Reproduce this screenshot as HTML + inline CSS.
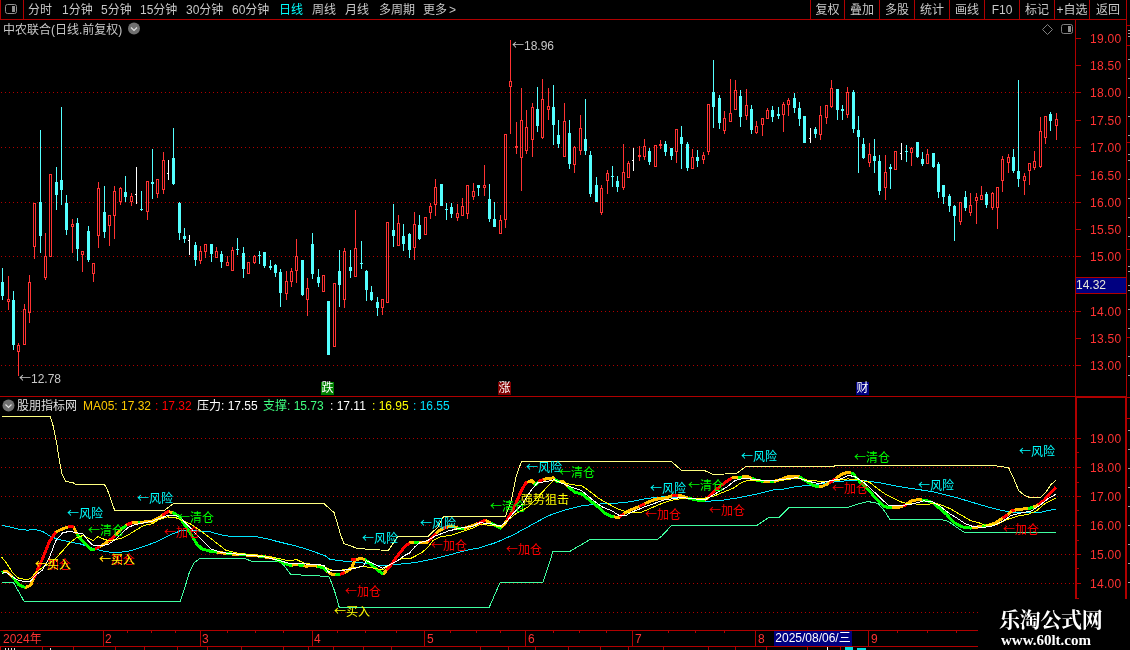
<!DOCTYPE html>
<html lang="zh"><head><meta charset="utf-8"><title>中农联合</title>
<style>
html,body{margin:0;padding:0;background:#000}
body{width:1130px;height:650px;position:relative;overflow:hidden;font-family:"Liberation Sans","Noto Sans CJK SC",sans-serif}
svg{position:absolute;left:0;top:0}
#txt{position:absolute;left:0;top:0;width:1130px;height:650px;will-change:transform;transform:translateZ(0)}
.t{position:absolute;white-space:nowrap;font-size:12px;line-height:14px;font-weight:400}
.a{font-family:"Liberation Sans","Noto Sans CJK SC",sans-serif;font-weight:400}
.ax{letter-spacing:0.3px}
.c{text-align:center}
.ar{font-family:"Noto Sans CJK SC",sans-serif;display:inline-block;width:12px}
.w{font-family:"Liberation Serif","Noto Serif CJK SC",serif;line-height:1.2}
</style></head><body>
<svg width="1130" height="650" viewBox="0 0 1130 650" shape-rendering="crispEdges">
<path d="M1 92.5H1074" stroke="#b00000" stroke-width="1" stroke-dasharray="1 3" fill="none"/>
<path d="M1 147.5H1074" stroke="#b00000" stroke-width="1" stroke-dasharray="1 3" fill="none"/>
<path d="M1 202.5H1074" stroke="#b00000" stroke-width="1" stroke-dasharray="1 3" fill="none"/>
<path d="M1 256.5H1074" stroke="#b00000" stroke-width="1" stroke-dasharray="1 3" fill="none"/>
<path d="M1 311.5H1074" stroke="#b00000" stroke-width="1" stroke-dasharray="1 3" fill="none"/>
<path d="M1 365.5H1074" stroke="#b00000" stroke-width="1" stroke-dasharray="1 3" fill="none"/>
<path d="M1 438.5H1074" stroke="#b00000" stroke-width="1" stroke-dasharray="1 3" fill="none"/>
<path d="M1 467.5H1074" stroke="#b00000" stroke-width="1" stroke-dasharray="1 3" fill="none"/>
<path d="M1 496.5H1074" stroke="#b00000" stroke-width="1" stroke-dasharray="1 3" fill="none"/>
<path d="M1 525.5H1074" stroke="#b00000" stroke-width="1" stroke-dasharray="1 3" fill="none"/>
<path d="M1 554.5H1074" stroke="#b00000" stroke-width="1" stroke-dasharray="1 3" fill="none"/>
<path d="M1 583.5H1074" stroke="#b00000" stroke-width="1" stroke-dasharray="1 3" fill="none"/>
<path d="M1 612.5H1074" stroke="#b00000" stroke-width="1" stroke-dasharray="1 3" fill="none"/>
<rect x="0" y="19" width="1127" height="1" fill="#b00000"/>
<rect x="0" y="0" width="1" height="19" fill="#b00000"/>
<rect x="23" y="0" width="1" height="19" fill="#b00000"/>
<rect x="810" y="0" width="1" height="19" fill="#b00000"/>
<rect x="844" y="0" width="1" height="19" fill="#b00000"/>
<rect x="879" y="0" width="1" height="19" fill="#b00000"/>
<rect x="914" y="0" width="1" height="19" fill="#b00000"/>
<rect x="949" y="0" width="1" height="19" fill="#b00000"/>
<rect x="984" y="0" width="1" height="19" fill="#b00000"/>
<rect x="1019" y="0" width="1" height="19" fill="#b00000"/>
<rect x="1054" y="0" width="1" height="19" fill="#b00000"/>
<rect x="1089" y="0" width="1" height="19" fill="#b00000"/>
<rect x="1126" y="0" width="1" height="397" fill="#b00000"/>
<rect x="1075" y="19" width="1" height="378" fill="#b00000"/>
<rect x="0" y="396" width="1075" height="1" fill="#b00000"/>
<rect x="1075" y="396" width="52" height="2" fill="#b00000"/>
<rect x="1075" y="396" width="2" height="203" fill="#b00000"/>
<rect x="1125" y="396" width="2" height="203" fill="#b00000"/>
<rect x="1127" y="25" width="3" height="1" fill="#b00000"/>
<rect x="1127" y="45" width="3" height="1" fill="#b00000"/>
<rect x="1127" y="142" width="3" height="1" fill="#b00000"/>
<rect x="1127" y="249" width="3" height="1" fill="#b00000"/>
<rect x="1127" y="337" width="3" height="1" fill="#b00000"/>
<rect x="1127" y="397" width="3" height="1" fill="#b00000"/>
<rect x="1127" y="418" width="3" height="1" fill="#b00000"/>
<rect x="1128" y="30" width="2" height="1" fill="#a0a0a0"/>
<rect x="1128" y="33" width="2" height="1" fill="#a0a0a0"/>
<rect x="1128" y="36" width="2" height="1" fill="#a0a0a0"/>
<rect x="1128" y="59" width="2" height="1" fill="#a0a0a0"/>
<rect x="1128" y="78" width="2" height="1" fill="#a0a0a0"/>
<rect x="1128" y="97" width="2" height="1" fill="#a0a0a0"/>
<rect x="1128" y="116" width="2" height="1" fill="#a0a0a0"/>
<rect x="1128" y="135" width="2" height="1" fill="#a0a0a0"/>
<rect x="1128" y="154" width="2" height="1" fill="#a0a0a0"/>
<rect x="1128" y="160" width="2" height="1" fill="#a0a0a0"/>
<rect x="1128" y="179" width="2" height="1" fill="#a0a0a0"/>
<rect x="1128" y="198" width="2" height="1" fill="#a0a0a0"/>
<rect x="1128" y="217" width="2" height="1" fill="#a0a0a0"/>
<rect x="1128" y="236" width="2" height="1" fill="#a0a0a0"/>
<rect x="1128" y="266" width="2" height="1" fill="#a0a0a0"/>
<rect x="1128" y="271" width="2" height="1" fill="#a0a0a0"/>
<rect x="1128" y="285" width="2" height="1" fill="#a0a0a0"/>
<rect x="1128" y="290" width="2" height="1" fill="#a0a0a0"/>
<rect x="1128" y="309" width="2" height="1" fill="#a0a0a0"/>
<rect x="1128" y="328" width="2" height="1" fill="#a0a0a0"/>
<rect x="1128" y="356" width="2" height="1" fill="#a0a0a0"/>
<rect x="1128" y="375" width="2" height="1" fill="#a0a0a0"/>
<rect x="1128" y="430" width="2" height="1" fill="#a0a0a0"/>
<rect x="1128" y="449" width="2" height="1" fill="#a0a0a0"/>
<rect x="1128" y="468" width="2" height="1" fill="#a0a0a0"/>
<rect x="1128" y="487" width="2" height="1" fill="#a0a0a0"/>
<rect x="1128" y="506" width="2" height="1" fill="#a0a0a0"/>
<rect x="1128" y="525" width="2" height="1" fill="#a0a0a0"/>
<rect x="1128" y="544" width="2" height="1" fill="#a0a0a0"/>
<rect x="1128" y="563" width="2" height="1" fill="#a0a0a0"/>
<rect x="1128" y="582" width="2" height="1" fill="#a0a0a0"/>
<rect x="0" y="630" width="978" height="1" fill="#b00000"/>
<rect x="0" y="646" width="978" height="1" fill="#b00000"/>
<rect x="103" y="630" width="1" height="16" fill="#b00000"/>
<rect x="200" y="630" width="1" height="16" fill="#b00000"/>
<rect x="312" y="630" width="1" height="16" fill="#b00000"/>
<rect x="424" y="630" width="1" height="16" fill="#b00000"/>
<rect x="525" y="630" width="1" height="16" fill="#b00000"/>
<rect x="632" y="630" width="1" height="16" fill="#b00000"/>
<rect x="755" y="630" width="1" height="16" fill="#b00000"/>
<rect x="868" y="630" width="1" height="16" fill="#b00000"/>
<rect x="127" y="631" width="1" height="2" fill="#b00000"/>
<rect x="151" y="631" width="1" height="2" fill="#b00000"/>
<rect x="175" y="631" width="1" height="2" fill="#b00000"/>
<rect x="227" y="631" width="1" height="2" fill="#b00000"/>
<rect x="255" y="631" width="1" height="2" fill="#b00000"/>
<rect x="283" y="631" width="1" height="2" fill="#b00000"/>
<rect x="337" y="631" width="1" height="2" fill="#b00000"/>
<rect x="365" y="631" width="1" height="2" fill="#b00000"/>
<rect x="396" y="631" width="1" height="2" fill="#b00000"/>
<rect x="450" y="631" width="1" height="2" fill="#b00000"/>
<rect x="476" y="631" width="1" height="2" fill="#b00000"/>
<rect x="500" y="631" width="1" height="2" fill="#b00000"/>
<rect x="553" y="631" width="1" height="2" fill="#b00000"/>
<rect x="579" y="631" width="1" height="2" fill="#b00000"/>
<rect x="606" y="631" width="1" height="2" fill="#b00000"/>
<rect x="668" y="631" width="1" height="2" fill="#b00000"/>
<rect x="695" y="631" width="1" height="2" fill="#b00000"/>
<rect x="724" y="631" width="1" height="2" fill="#b00000"/>
<rect x="897" y="631" width="1" height="2" fill="#b00000"/>
<rect x="927" y="631" width="1" height="2" fill="#b00000"/>
<rect x="956" y="631" width="1" height="2" fill="#b00000"/>
<rect x="0" y="647" width="1" height="3" fill="#b00000"/>
<rect x="42" y="647" width="1" height="3" fill="#b00000"/>
<rect x="73" y="647" width="1" height="3" fill="#b00000"/>
<rect x="115" y="647" width="1" height="3" fill="#b00000"/>
<rect x="144" y="647" width="1" height="3" fill="#b00000"/>
<rect x="177" y="647" width="1" height="3" fill="#b00000"/>
<rect x="207" y="647" width="1" height="3" fill="#b00000"/>
<rect x="241" y="647" width="1" height="3" fill="#b00000"/>
<rect x="283" y="647" width="1" height="3" fill="#b00000"/>
<rect x="308" y="647" width="1" height="3" fill="#b00000"/>
<rect x="333" y="647" width="1" height="3" fill="#b00000"/>
<rect x="363" y="647" width="1" height="3" fill="#b00000"/>
<rect x="391" y="647" width="1" height="3" fill="#b00000"/>
<rect x="480" y="647" width="1" height="3" fill="#b00000"/>
<rect x="508" y="647" width="1" height="3" fill="#b00000"/>
<rect x="535" y="647" width="1" height="3" fill="#b00000"/>
<rect x="568" y="647" width="1" height="3" fill="#b00000"/>
<rect x="600" y="647" width="1" height="3" fill="#b00000"/>
<rect x="628" y="647" width="1" height="3" fill="#b00000"/>
<rect x="663" y="647" width="1" height="3" fill="#b00000"/>
<rect x="708" y="647" width="1" height="3" fill="#b00000"/>
<rect x="735" y="647" width="1" height="3" fill="#b00000"/>
<rect x="766" y="647" width="1" height="3" fill="#b00000"/>
<rect x="807" y="647" width="1" height="3" fill="#b00000"/>
<rect x="840" y="647" width="1" height="3" fill="#b00000"/>
<rect x="827" y="647" width="1" height="3" fill="#ffffff"/>
<rect x="845" y="647" width="8" height="3" fill="#00e0e0"/>
<rect x="857" y="648" width="9" height="2" fill="#00e0e0"/>
<rect x="5" y="648" width="1" height="2" fill="#e0e0e0"/>
<rect x="8" y="648" width="1" height="2" fill="#e0e0e0"/>
<rect x="11" y="648" width="1" height="2" fill="#e0e0e0"/>
<rect x="14" y="648" width="1" height="2" fill="#e0e0e0"/>
<rect x="50" y="648" width="1" height="2" fill="#e0e0e0"/>
<rect x="1076" y="38" width="5" height="1" fill="#b00000"/>
<rect x="1076" y="65" width="5" height="1" fill="#b00000"/>
<rect x="1076" y="92" width="5" height="1" fill="#b00000"/>
<rect x="1076" y="120" width="5" height="1" fill="#b00000"/>
<rect x="1076" y="147" width="5" height="1" fill="#b00000"/>
<rect x="1076" y="175" width="5" height="1" fill="#b00000"/>
<rect x="1076" y="202" width="5" height="1" fill="#b00000"/>
<rect x="1076" y="229" width="5" height="1" fill="#b00000"/>
<rect x="1076" y="256" width="5" height="1" fill="#b00000"/>
<rect x="1076" y="284" width="5" height="1" fill="#b00000"/>
<rect x="1076" y="311" width="5" height="1" fill="#b00000"/>
<rect x="1076" y="338" width="5" height="1" fill="#b00000"/>
<rect x="1076" y="365" width="5" height="1" fill="#b00000"/>
<rect x="1077" y="438" width="4" height="1" fill="#b00000"/>
<rect x="1077" y="452" width="2" height="1" fill="#b00000"/>
<rect x="1077" y="467" width="4" height="1" fill="#b00000"/>
<rect x="1077" y="482" width="2" height="1" fill="#b00000"/>
<rect x="1077" y="496" width="4" height="1" fill="#b00000"/>
<rect x="1077" y="510" width="2" height="1" fill="#b00000"/>
<rect x="1077" y="525" width="4" height="1" fill="#b00000"/>
<rect x="1077" y="540" width="2" height="1" fill="#b00000"/>
<rect x="1077" y="554" width="4" height="1" fill="#b00000"/>
<rect x="1077" y="568" width="2" height="1" fill="#b00000"/>
<rect x="1077" y="583" width="4" height="1" fill="#b00000"/>
<rect x="1077" y="598" width="2" height="1" fill="#b00000"/>
<rect x="2" y="268" width="1" height="32" fill="#54ffff"/>
<rect x="1" y="282" width="3" height="14" fill="#54ffff"/>
<rect x="8" y="276" width="1" height="23" fill="#ff3232"/>
<rect x="8" y="302" width="1" height="8" fill="#ff3232"/>
<rect x="7" y="299" width="3" height="1" fill="#ff3232"/>
<rect x="7" y="301" width="3" height="1" fill="#ff3232"/>
<rect x="7" y="299" width="1" height="3" fill="#ff3232"/>
<rect x="9" y="299" width="1" height="3" fill="#ff3232"/>
<rect x="13" y="291" width="1" height="59" fill="#54ffff"/>
<rect x="12" y="300" width="3" height="45" fill="#54ffff"/>
<rect x="18" y="343" width="1" height="2" fill="#ff3232"/>
<rect x="18" y="352" width="1" height="24" fill="#ff3232"/>
<rect x="17" y="345" width="3" height="1" fill="#ff3232"/>
<rect x="17" y="351" width="3" height="1" fill="#ff3232"/>
<rect x="17" y="345" width="1" height="7" fill="#ff3232"/>
<rect x="19" y="345" width="1" height="7" fill="#ff3232"/>
<rect x="24" y="304" width="1" height="5" fill="#ff3232"/>
<rect x="23" y="309" width="3" height="1" fill="#ff3232"/>
<rect x="23" y="344" width="3" height="1" fill="#ff3232"/>
<rect x="23" y="309" width="1" height="36" fill="#ff3232"/>
<rect x="25" y="309" width="1" height="36" fill="#ff3232"/>
<rect x="29" y="275" width="1" height="7" fill="#ff3232"/>
<rect x="29" y="313" width="1" height="10" fill="#ff3232"/>
<rect x="28" y="282" width="3" height="1" fill="#ff3232"/>
<rect x="28" y="312" width="3" height="1" fill="#ff3232"/>
<rect x="28" y="282" width="1" height="31" fill="#ff3232"/>
<rect x="30" y="282" width="1" height="31" fill="#ff3232"/>
<rect x="34" y="247" width="1" height="12" fill="#ff3232"/>
<rect x="33" y="203" width="3" height="1" fill="#ff3232"/>
<rect x="33" y="246" width="3" height="1" fill="#ff3232"/>
<rect x="33" y="203" width="1" height="44" fill="#ff3232"/>
<rect x="35" y="203" width="1" height="44" fill="#ff3232"/>
<rect x="40" y="130" width="1" height="123" fill="#54ffff"/>
<rect x="39" y="202" width="3" height="34" fill="#54ffff"/>
<rect x="45" y="233" width="1" height="23" fill="#ff3232"/>
<rect x="45" y="278" width="1" height="2" fill="#ff3232"/>
<rect x="44" y="256" width="3" height="1" fill="#ff3232"/>
<rect x="44" y="277" width="3" height="1" fill="#ff3232"/>
<rect x="44" y="256" width="1" height="22" fill="#ff3232"/>
<rect x="46" y="256" width="1" height="22" fill="#ff3232"/>
<rect x="49" y="174" width="3" height="1" fill="#ff3232"/>
<rect x="49" y="256" width="3" height="1" fill="#ff3232"/>
<rect x="49" y="174" width="1" height="83" fill="#ff3232"/>
<rect x="51" y="174" width="1" height="83" fill="#ff3232"/>
<rect x="56" y="167" width="1" height="43" fill="#54ffff"/>
<rect x="55" y="182" width="3" height="13" fill="#54ffff"/>
<rect x="61" y="107" width="1" height="98" fill="#54ffff"/>
<rect x="60" y="180" width="3" height="10" fill="#54ffff"/>
<rect x="66" y="195" width="1" height="40" fill="#54ffff"/>
<rect x="65" y="203" width="3" height="27" fill="#54ffff"/>
<rect x="72" y="219" width="1" height="5" fill="#ff3232"/>
<rect x="72" y="227" width="1" height="26" fill="#ff3232"/>
<rect x="71" y="224" width="3" height="1" fill="#ff3232"/>
<rect x="71" y="226" width="3" height="1" fill="#ff3232"/>
<rect x="71" y="224" width="1" height="3" fill="#ff3232"/>
<rect x="73" y="224" width="1" height="3" fill="#ff3232"/>
<rect x="77" y="218" width="1" height="43" fill="#54ffff"/>
<rect x="76" y="223" width="3" height="26" fill="#54ffff"/>
<rect x="82" y="255" width="1" height="17" fill="#ff3232"/>
<rect x="81" y="251" width="3" height="1" fill="#ff3232"/>
<rect x="81" y="254" width="3" height="1" fill="#ff3232"/>
<rect x="81" y="251" width="1" height="4" fill="#ff3232"/>
<rect x="83" y="251" width="1" height="4" fill="#ff3232"/>
<rect x="88" y="226" width="1" height="36" fill="#54ffff"/>
<rect x="87" y="231" width="3" height="29" fill="#54ffff"/>
<rect x="93" y="274" width="1" height="8" fill="#ff3232"/>
<rect x="92" y="263" width="3" height="1" fill="#ff3232"/>
<rect x="92" y="273" width="3" height="1" fill="#ff3232"/>
<rect x="92" y="263" width="1" height="11" fill="#ff3232"/>
<rect x="94" y="263" width="1" height="11" fill="#ff3232"/>
<rect x="98" y="182" width="1" height="6" fill="#ff3232"/>
<rect x="98" y="236" width="1" height="12" fill="#ff3232"/>
<rect x="97" y="188" width="3" height="1" fill="#ff3232"/>
<rect x="97" y="235" width="3" height="1" fill="#ff3232"/>
<rect x="97" y="188" width="1" height="48" fill="#ff3232"/>
<rect x="99" y="188" width="1" height="48" fill="#ff3232"/>
<rect x="104" y="186" width="1" height="52" fill="#54ffff"/>
<rect x="103" y="212" width="3" height="20" fill="#54ffff"/>
<rect x="109" y="226" width="1" height="20" fill="#ff3232"/>
<rect x="108" y="215" width="3" height="1" fill="#ff3232"/>
<rect x="108" y="225" width="3" height="1" fill="#ff3232"/>
<rect x="108" y="215" width="1" height="11" fill="#ff3232"/>
<rect x="110" y="215" width="1" height="11" fill="#ff3232"/>
<rect x="114" y="186" width="1" height="5" fill="#ff3232"/>
<rect x="114" y="216" width="1" height="23" fill="#ff3232"/>
<rect x="113" y="191" width="3" height="1" fill="#ff3232"/>
<rect x="113" y="215" width="3" height="1" fill="#ff3232"/>
<rect x="113" y="191" width="1" height="25" fill="#ff3232"/>
<rect x="115" y="191" width="1" height="25" fill="#ff3232"/>
<rect x="120" y="187" width="1" height="1" fill="#ff3232"/>
<rect x="120" y="202" width="1" height="3" fill="#ff3232"/>
<rect x="119" y="188" width="3" height="1" fill="#ff3232"/>
<rect x="119" y="201" width="3" height="1" fill="#ff3232"/>
<rect x="119" y="188" width="1" height="14" fill="#ff3232"/>
<rect x="121" y="188" width="1" height="14" fill="#ff3232"/>
<rect x="125" y="176" width="1" height="26" fill="#54ffff"/>
<rect x="124" y="192" width="3" height="5" fill="#54ffff"/>
<rect x="131" y="193" width="1" height="3" fill="#ff3232"/>
<rect x="131" y="202" width="1" height="4" fill="#ff3232"/>
<rect x="130" y="196" width="3" height="1" fill="#ff3232"/>
<rect x="130" y="201" width="3" height="1" fill="#ff3232"/>
<rect x="130" y="196" width="1" height="6" fill="#ff3232"/>
<rect x="132" y="196" width="1" height="6" fill="#ff3232"/>
<rect x="136" y="167" width="1" height="37" fill="#ffffff"/>
<rect x="135" y="194" width="2" height="1" fill="#ffffff"/>
<rect x="141" y="191" width="1" height="20" fill="#54ffff"/>
<rect x="140" y="209" width="3" height="1" fill="#54ffff"/>
<rect x="147" y="212" width="1" height="8" fill="#ff3232"/>
<rect x="146" y="181" width="3" height="1" fill="#ff3232"/>
<rect x="146" y="211" width="3" height="1" fill="#ff3232"/>
<rect x="146" y="181" width="1" height="31" fill="#ff3232"/>
<rect x="148" y="181" width="1" height="31" fill="#ff3232"/>
<rect x="152" y="149" width="1" height="50" fill="#54ffff"/>
<rect x="151" y="182" width="3" height="2" fill="#54ffff"/>
<rect x="157" y="194" width="1" height="4" fill="#ff3232"/>
<rect x="156" y="179" width="3" height="1" fill="#ff3232"/>
<rect x="156" y="193" width="3" height="1" fill="#ff3232"/>
<rect x="156" y="179" width="1" height="15" fill="#ff3232"/>
<rect x="158" y="179" width="1" height="15" fill="#ff3232"/>
<rect x="163" y="152" width="1" height="8" fill="#ff3232"/>
<rect x="163" y="190" width="1" height="4" fill="#ff3232"/>
<rect x="162" y="160" width="3" height="1" fill="#ff3232"/>
<rect x="162" y="189" width="3" height="1" fill="#ff3232"/>
<rect x="162" y="160" width="1" height="30" fill="#ff3232"/>
<rect x="164" y="160" width="1" height="30" fill="#ff3232"/>
<rect x="168" y="160" width="1" height="20" fill="#ffffff"/>
<rect x="167" y="173" width="2" height="1" fill="#ffffff"/>
<rect x="173" y="128" width="1" height="57" fill="#54ffff"/>
<rect x="172" y="158" width="3" height="26" fill="#54ffff"/>
<rect x="179" y="202" width="1" height="38" fill="#54ffff"/>
<rect x="178" y="203" width="3" height="30" fill="#54ffff"/>
<rect x="184" y="228" width="1" height="15" fill="#54ffff"/>
<rect x="183" y="236" width="3" height="3" fill="#54ffff"/>
<rect x="189" y="235" width="1" height="20" fill="#ffffff"/>
<rect x="188" y="240" width="2" height="1" fill="#ffffff"/>
<rect x="195" y="242" width="1" height="24" fill="#54ffff"/>
<rect x="194" y="245" width="3" height="15" fill="#54ffff"/>
<rect x="200" y="246" width="1" height="5" fill="#ff3232"/>
<rect x="200" y="261" width="1" height="3" fill="#ff3232"/>
<rect x="199" y="251" width="3" height="1" fill="#ff3232"/>
<rect x="199" y="260" width="3" height="1" fill="#ff3232"/>
<rect x="199" y="251" width="1" height="10" fill="#ff3232"/>
<rect x="201" y="251" width="1" height="10" fill="#ff3232"/>
<rect x="205" y="252" width="1" height="6" fill="#ff3232"/>
<rect x="204" y="244" width="3" height="1" fill="#ff3232"/>
<rect x="204" y="251" width="3" height="1" fill="#ff3232"/>
<rect x="204" y="244" width="1" height="8" fill="#ff3232"/>
<rect x="206" y="244" width="1" height="8" fill="#ff3232"/>
<rect x="211" y="244" width="1" height="18" fill="#54ffff"/>
<rect x="210" y="244" width="3" height="10" fill="#54ffff"/>
<rect x="216" y="247" width="1" height="4" fill="#ff3232"/>
<rect x="215" y="251" width="3" height="1" fill="#ff3232"/>
<rect x="215" y="257" width="3" height="1" fill="#ff3232"/>
<rect x="215" y="251" width="1" height="7" fill="#ff3232"/>
<rect x="217" y="251" width="1" height="7" fill="#ff3232"/>
<rect x="221" y="251" width="1" height="17" fill="#54ffff"/>
<rect x="220" y="254" width="3" height="8" fill="#54ffff"/>
<rect x="227" y="256" width="1" height="6" fill="#ff3232"/>
<rect x="226" y="262" width="3" height="1" fill="#ff3232"/>
<rect x="226" y="265" width="3" height="1" fill="#ff3232"/>
<rect x="226" y="262" width="1" height="4" fill="#ff3232"/>
<rect x="228" y="262" width="1" height="4" fill="#ff3232"/>
<rect x="232" y="247" width="1" height="3" fill="#ff3232"/>
<rect x="231" y="250" width="3" height="1" fill="#ff3232"/>
<rect x="231" y="270" width="3" height="1" fill="#ff3232"/>
<rect x="231" y="250" width="1" height="21" fill="#ff3232"/>
<rect x="233" y="250" width="1" height="21" fill="#ff3232"/>
<rect x="237" y="238" width="1" height="17" fill="#54ffff"/>
<rect x="236" y="249" width="3" height="1" fill="#54ffff"/>
<rect x="243" y="247" width="1" height="31" fill="#54ffff"/>
<rect x="242" y="253" width="3" height="16" fill="#54ffff"/>
<rect x="247" y="262" width="3" height="1" fill="#ff3232"/>
<rect x="247" y="273" width="3" height="1" fill="#ff3232"/>
<rect x="247" y="262" width="1" height="12" fill="#ff3232"/>
<rect x="249" y="262" width="1" height="12" fill="#ff3232"/>
<rect x="254" y="255" width="1" height="1" fill="#ff3232"/>
<rect x="254" y="263" width="1" height="1" fill="#ff3232"/>
<rect x="253" y="256" width="3" height="1" fill="#ff3232"/>
<rect x="253" y="262" width="3" height="1" fill="#ff3232"/>
<rect x="253" y="256" width="1" height="7" fill="#ff3232"/>
<rect x="255" y="256" width="1" height="7" fill="#ff3232"/>
<rect x="259" y="251" width="1" height="13" fill="#54ffff"/>
<rect x="258" y="255" width="3" height="1" fill="#54ffff"/>
<rect x="264" y="252" width="1" height="16" fill="#54ffff"/>
<rect x="263" y="252" width="3" height="14" fill="#54ffff"/>
<rect x="270" y="260" width="1" height="10" fill="#54ffff"/>
<rect x="269" y="266" width="3" height="2" fill="#54ffff"/>
<rect x="275" y="264" width="1" height="13" fill="#54ffff"/>
<rect x="274" y="265" width="3" height="8" fill="#54ffff"/>
<rect x="280" y="269" width="1" height="38" fill="#54ffff"/>
<rect x="279" y="272" width="3" height="21" fill="#54ffff"/>
<rect x="286" y="271" width="1" height="10" fill="#ff3232"/>
<rect x="286" y="294" width="1" height="6" fill="#ff3232"/>
<rect x="285" y="281" width="3" height="1" fill="#ff3232"/>
<rect x="285" y="293" width="3" height="1" fill="#ff3232"/>
<rect x="285" y="281" width="1" height="13" fill="#ff3232"/>
<rect x="287" y="281" width="1" height="13" fill="#ff3232"/>
<rect x="291" y="268" width="1" height="3" fill="#ff3232"/>
<rect x="291" y="282" width="1" height="5" fill="#ff3232"/>
<rect x="290" y="271" width="3" height="1" fill="#ff3232"/>
<rect x="290" y="281" width="3" height="1" fill="#ff3232"/>
<rect x="290" y="271" width="1" height="11" fill="#ff3232"/>
<rect x="292" y="271" width="1" height="11" fill="#ff3232"/>
<rect x="296" y="239" width="1" height="17" fill="#ff3232"/>
<rect x="296" y="271" width="1" height="12" fill="#ff3232"/>
<rect x="295" y="256" width="3" height="1" fill="#ff3232"/>
<rect x="295" y="270" width="3" height="1" fill="#ff3232"/>
<rect x="295" y="256" width="1" height="15" fill="#ff3232"/>
<rect x="297" y="256" width="1" height="15" fill="#ff3232"/>
<rect x="302" y="260" width="1" height="36" fill="#54ffff"/>
<rect x="301" y="260" width="3" height="35" fill="#54ffff"/>
<rect x="307" y="278" width="1" height="10" fill="#ff3232"/>
<rect x="307" y="300" width="1" height="16" fill="#ff3232"/>
<rect x="306" y="288" width="3" height="1" fill="#ff3232"/>
<rect x="306" y="299" width="3" height="1" fill="#ff3232"/>
<rect x="306" y="288" width="1" height="12" fill="#ff3232"/>
<rect x="308" y="288" width="1" height="12" fill="#ff3232"/>
<rect x="312" y="233" width="1" height="46" fill="#54ffff"/>
<rect x="311" y="244" width="3" height="30" fill="#54ffff"/>
<rect x="318" y="269" width="1" height="18" fill="#54ffff"/>
<rect x="317" y="277" width="3" height="6" fill="#54ffff"/>
<rect x="322" y="275" width="3" height="1" fill="#ff3232"/>
<rect x="322" y="291" width="3" height="1" fill="#ff3232"/>
<rect x="322" y="275" width="1" height="17" fill="#ff3232"/>
<rect x="324" y="275" width="1" height="17" fill="#ff3232"/>
<rect x="328" y="301" width="1" height="54" fill="#54ffff"/>
<rect x="327" y="301" width="3" height="54" fill="#54ffff"/>
<rect x="333" y="283" width="3" height="1" fill="#ff3232"/>
<rect x="333" y="346" width="3" height="1" fill="#ff3232"/>
<rect x="333" y="283" width="1" height="64" fill="#ff3232"/>
<rect x="335" y="283" width="1" height="64" fill="#ff3232"/>
<rect x="339" y="250" width="1" height="57" fill="#54ffff"/>
<rect x="338" y="271" width="3" height="14" fill="#54ffff"/>
<rect x="344" y="248" width="1" height="3" fill="#ff3232"/>
<rect x="344" y="300" width="1" height="8" fill="#ff3232"/>
<rect x="343" y="251" width="3" height="1" fill="#ff3232"/>
<rect x="343" y="299" width="3" height="1" fill="#ff3232"/>
<rect x="343" y="251" width="1" height="49" fill="#ff3232"/>
<rect x="345" y="251" width="1" height="49" fill="#ff3232"/>
<rect x="350" y="250" width="1" height="28" fill="#54ffff"/>
<rect x="349" y="267" width="3" height="4" fill="#54ffff"/>
<rect x="355" y="210" width="1" height="38" fill="#ff3232"/>
<rect x="354" y="248" width="3" height="1" fill="#ff3232"/>
<rect x="354" y="276" width="3" height="1" fill="#ff3232"/>
<rect x="354" y="248" width="1" height="29" fill="#ff3232"/>
<rect x="356" y="248" width="1" height="29" fill="#ff3232"/>
<rect x="361" y="241" width="1" height="28" fill="#54ffff"/>
<rect x="360" y="263" width="3" height="1" fill="#54ffff"/>
<rect x="366" y="270" width="1" height="31" fill="#54ffff"/>
<rect x="365" y="271" width="3" height="19" fill="#54ffff"/>
<rect x="371" y="286" width="1" height="15" fill="#54ffff"/>
<rect x="370" y="292" width="3" height="8" fill="#54ffff"/>
<rect x="377" y="297" width="1" height="19" fill="#54ffff"/>
<rect x="376" y="302" width="3" height="6" fill="#54ffff"/>
<rect x="382" y="308" width="1" height="7" fill="#ff3232"/>
<rect x="381" y="299" width="3" height="1" fill="#ff3232"/>
<rect x="381" y="307" width="3" height="1" fill="#ff3232"/>
<rect x="381" y="299" width="1" height="9" fill="#ff3232"/>
<rect x="383" y="299" width="1" height="9" fill="#ff3232"/>
<rect x="386" y="222" width="3" height="1" fill="#ff3232"/>
<rect x="386" y="302" width="3" height="1" fill="#ff3232"/>
<rect x="386" y="222" width="1" height="81" fill="#ff3232"/>
<rect x="388" y="222" width="1" height="81" fill="#ff3232"/>
<rect x="393" y="204" width="1" height="43" fill="#54ffff"/>
<rect x="392" y="230" width="3" height="6" fill="#54ffff"/>
<rect x="398" y="215" width="1" height="8" fill="#ff3232"/>
<rect x="397" y="223" width="3" height="1" fill="#ff3232"/>
<rect x="397" y="245" width="3" height="1" fill="#ff3232"/>
<rect x="397" y="223" width="1" height="23" fill="#ff3232"/>
<rect x="399" y="223" width="1" height="23" fill="#ff3232"/>
<rect x="403" y="224" width="1" height="27" fill="#54ffff"/>
<rect x="402" y="236" width="3" height="8" fill="#54ffff"/>
<rect x="409" y="233" width="1" height="25" fill="#54ffff"/>
<rect x="408" y="234" width="3" height="16" fill="#54ffff"/>
<rect x="414" y="212" width="1" height="12" fill="#ff3232"/>
<rect x="414" y="248" width="1" height="12" fill="#ff3232"/>
<rect x="413" y="224" width="3" height="1" fill="#ff3232"/>
<rect x="413" y="247" width="3" height="1" fill="#ff3232"/>
<rect x="413" y="224" width="1" height="24" fill="#ff3232"/>
<rect x="415" y="224" width="1" height="24" fill="#ff3232"/>
<rect x="419" y="215" width="1" height="25" fill="#54ffff"/>
<rect x="418" y="225" width="3" height="14" fill="#54ffff"/>
<rect x="424" y="217" width="3" height="1" fill="#ff3232"/>
<rect x="424" y="234" width="3" height="1" fill="#ff3232"/>
<rect x="424" y="217" width="1" height="18" fill="#ff3232"/>
<rect x="426" y="217" width="1" height="18" fill="#ff3232"/>
<rect x="430" y="203" width="1" height="3" fill="#ff3232"/>
<rect x="430" y="213" width="1" height="6" fill="#ff3232"/>
<rect x="429" y="206" width="3" height="1" fill="#ff3232"/>
<rect x="429" y="212" width="3" height="1" fill="#ff3232"/>
<rect x="429" y="206" width="1" height="7" fill="#ff3232"/>
<rect x="431" y="206" width="1" height="7" fill="#ff3232"/>
<rect x="435" y="179" width="1" height="8" fill="#ff3232"/>
<rect x="435" y="205" width="1" height="11" fill="#ff3232"/>
<rect x="434" y="187" width="3" height="1" fill="#ff3232"/>
<rect x="434" y="204" width="3" height="1" fill="#ff3232"/>
<rect x="434" y="187" width="1" height="18" fill="#ff3232"/>
<rect x="436" y="187" width="1" height="18" fill="#ff3232"/>
<rect x="441" y="184" width="1" height="22" fill="#54ffff"/>
<rect x="440" y="184" width="3" height="22" fill="#54ffff"/>
<rect x="446" y="203" width="1" height="17" fill="#54ffff"/>
<rect x="445" y="209" width="3" height="1" fill="#54ffff"/>
<rect x="451" y="203" width="1" height="15" fill="#54ffff"/>
<rect x="450" y="207" width="3" height="7" fill="#54ffff"/>
<rect x="457" y="204" width="1" height="9" fill="#ff3232"/>
<rect x="457" y="218" width="1" height="3" fill="#ff3232"/>
<rect x="456" y="213" width="3" height="1" fill="#ff3232"/>
<rect x="456" y="217" width="3" height="1" fill="#ff3232"/>
<rect x="456" y="213" width="1" height="5" fill="#ff3232"/>
<rect x="458" y="213" width="1" height="5" fill="#ff3232"/>
<rect x="462" y="198" width="1" height="8" fill="#ff3232"/>
<rect x="461" y="206" width="3" height="1" fill="#ff3232"/>
<rect x="461" y="215" width="3" height="1" fill="#ff3232"/>
<rect x="461" y="206" width="1" height="10" fill="#ff3232"/>
<rect x="463" y="206" width="1" height="10" fill="#ff3232"/>
<rect x="467" y="214" width="1" height="5" fill="#ff3232"/>
<rect x="466" y="185" width="3" height="1" fill="#ff3232"/>
<rect x="466" y="213" width="3" height="1" fill="#ff3232"/>
<rect x="466" y="185" width="1" height="29" fill="#ff3232"/>
<rect x="468" y="185" width="1" height="29" fill="#ff3232"/>
<rect x="473" y="183" width="1" height="8" fill="#ff3232"/>
<rect x="473" y="197" width="1" height="3" fill="#ff3232"/>
<rect x="472" y="191" width="3" height="1" fill="#ff3232"/>
<rect x="472" y="196" width="3" height="1" fill="#ff3232"/>
<rect x="472" y="191" width="1" height="6" fill="#ff3232"/>
<rect x="474" y="191" width="1" height="6" fill="#ff3232"/>
<rect x="478" y="185" width="1" height="11" fill="#54ffff"/>
<rect x="477" y="185" width="3" height="3" fill="#54ffff"/>
<rect x="484" y="165" width="1" height="20" fill="#ff3232"/>
<rect x="484" y="188" width="1" height="8" fill="#ff3232"/>
<rect x="483" y="185" width="3" height="1" fill="#ff3232"/>
<rect x="483" y="187" width="3" height="1" fill="#ff3232"/>
<rect x="483" y="185" width="1" height="3" fill="#ff3232"/>
<rect x="485" y="185" width="1" height="3" fill="#ff3232"/>
<rect x="489" y="184" width="1" height="38" fill="#54ffff"/>
<rect x="488" y="199" width="3" height="20" fill="#54ffff"/>
<rect x="494" y="202" width="1" height="25" fill="#54ffff"/>
<rect x="493" y="219" width="3" height="8" fill="#54ffff"/>
<rect x="500" y="215" width="1" height="5" fill="#ff3232"/>
<rect x="499" y="220" width="3" height="1" fill="#ff3232"/>
<rect x="499" y="233" width="3" height="1" fill="#ff3232"/>
<rect x="499" y="220" width="1" height="14" fill="#ff3232"/>
<rect x="501" y="220" width="1" height="14" fill="#ff3232"/>
<rect x="505" y="220" width="1" height="8" fill="#ff3232"/>
<rect x="504" y="134" width="3" height="1" fill="#ff3232"/>
<rect x="504" y="219" width="3" height="1" fill="#ff3232"/>
<rect x="504" y="134" width="1" height="86" fill="#ff3232"/>
<rect x="506" y="134" width="1" height="86" fill="#ff3232"/>
<rect x="510" y="40" width="1" height="41" fill="#ff3232"/>
<rect x="510" y="87" width="1" height="47" fill="#ff3232"/>
<rect x="509" y="81" width="3" height="1" fill="#ff3232"/>
<rect x="509" y="86" width="3" height="1" fill="#ff3232"/>
<rect x="509" y="81" width="1" height="6" fill="#ff3232"/>
<rect x="511" y="81" width="1" height="6" fill="#ff3232"/>
<rect x="516" y="122" width="1" height="24" fill="#ff3232"/>
<rect x="516" y="148" width="1" height="6" fill="#ff3232"/>
<rect x="515" y="146" width="3" height="2" fill="#ff3232"/>
<rect x="521" y="88" width="1" height="32" fill="#ff3232"/>
<rect x="521" y="158" width="1" height="33" fill="#ff3232"/>
<rect x="520" y="120" width="3" height="1" fill="#ff3232"/>
<rect x="520" y="157" width="3" height="1" fill="#ff3232"/>
<rect x="520" y="120" width="1" height="38" fill="#ff3232"/>
<rect x="522" y="120" width="1" height="38" fill="#ff3232"/>
<rect x="526" y="110" width="1" height="17" fill="#ff3232"/>
<rect x="526" y="151" width="1" height="3" fill="#ff3232"/>
<rect x="525" y="127" width="3" height="1" fill="#ff3232"/>
<rect x="525" y="150" width="3" height="1" fill="#ff3232"/>
<rect x="525" y="127" width="1" height="24" fill="#ff3232"/>
<rect x="527" y="127" width="1" height="24" fill="#ff3232"/>
<rect x="532" y="103" width="1" height="4" fill="#ff3232"/>
<rect x="532" y="140" width="1" height="17" fill="#ff3232"/>
<rect x="531" y="107" width="3" height="1" fill="#ff3232"/>
<rect x="531" y="139" width="3" height="1" fill="#ff3232"/>
<rect x="531" y="107" width="1" height="33" fill="#ff3232"/>
<rect x="533" y="107" width="1" height="33" fill="#ff3232"/>
<rect x="537" y="87" width="1" height="45" fill="#54ffff"/>
<rect x="536" y="109" width="3" height="17" fill="#54ffff"/>
<rect x="542" y="79" width="1" height="20" fill="#ff3232"/>
<rect x="542" y="138" width="1" height="1" fill="#ff3232"/>
<rect x="541" y="99" width="3" height="1" fill="#ff3232"/>
<rect x="541" y="137" width="3" height="1" fill="#ff3232"/>
<rect x="541" y="99" width="1" height="39" fill="#ff3232"/>
<rect x="543" y="99" width="1" height="39" fill="#ff3232"/>
<rect x="548" y="88" width="1" height="18" fill="#ff3232"/>
<rect x="548" y="110" width="1" height="10" fill="#ff3232"/>
<rect x="547" y="106" width="3" height="1" fill="#ff3232"/>
<rect x="547" y="109" width="3" height="1" fill="#ff3232"/>
<rect x="547" y="106" width="1" height="4" fill="#ff3232"/>
<rect x="549" y="106" width="1" height="4" fill="#ff3232"/>
<rect x="553" y="85" width="1" height="60" fill="#54ffff"/>
<rect x="552" y="107" width="3" height="18" fill="#54ffff"/>
<rect x="558" y="120" width="1" height="28" fill="#54ffff"/>
<rect x="557" y="135" width="3" height="9" fill="#54ffff"/>
<rect x="564" y="103" width="1" height="18" fill="#ff3232"/>
<rect x="563" y="121" width="3" height="1" fill="#ff3232"/>
<rect x="563" y="156" width="3" height="1" fill="#ff3232"/>
<rect x="563" y="121" width="1" height="36" fill="#ff3232"/>
<rect x="565" y="121" width="1" height="36" fill="#ff3232"/>
<rect x="569" y="120" width="1" height="49" fill="#54ffff"/>
<rect x="568" y="133" width="3" height="31" fill="#54ffff"/>
<rect x="574" y="146" width="1" height="1" fill="#ff3232"/>
<rect x="574" y="165" width="1" height="8" fill="#ff3232"/>
<rect x="573" y="147" width="3" height="1" fill="#ff3232"/>
<rect x="573" y="164" width="3" height="1" fill="#ff3232"/>
<rect x="573" y="147" width="1" height="18" fill="#ff3232"/>
<rect x="575" y="147" width="1" height="18" fill="#ff3232"/>
<rect x="580" y="115" width="1" height="13" fill="#ff3232"/>
<rect x="580" y="151" width="1" height="4" fill="#ff3232"/>
<rect x="579" y="128" width="3" height="1" fill="#ff3232"/>
<rect x="579" y="150" width="3" height="1" fill="#ff3232"/>
<rect x="579" y="128" width="1" height="23" fill="#ff3232"/>
<rect x="581" y="128" width="1" height="23" fill="#ff3232"/>
<rect x="585" y="99" width="1" height="56" fill="#54ffff"/>
<rect x="584" y="139" width="3" height="12" fill="#54ffff"/>
<rect x="590" y="151" width="1" height="46" fill="#54ffff"/>
<rect x="589" y="155" width="3" height="39" fill="#54ffff"/>
<rect x="596" y="177" width="1" height="25" fill="#54ffff"/>
<rect x="595" y="185" width="3" height="17" fill="#54ffff"/>
<rect x="601" y="185" width="1" height="3" fill="#ff3232"/>
<rect x="601" y="213" width="1" height="2" fill="#ff3232"/>
<rect x="600" y="188" width="3" height="1" fill="#ff3232"/>
<rect x="600" y="212" width="3" height="1" fill="#ff3232"/>
<rect x="600" y="188" width="1" height="25" fill="#ff3232"/>
<rect x="602" y="188" width="1" height="25" fill="#ff3232"/>
<rect x="607" y="170" width="1" height="3" fill="#ff3232"/>
<rect x="607" y="181" width="1" height="13" fill="#ff3232"/>
<rect x="606" y="173" width="3" height="1" fill="#ff3232"/>
<rect x="606" y="180" width="3" height="1" fill="#ff3232"/>
<rect x="606" y="173" width="1" height="8" fill="#ff3232"/>
<rect x="608" y="173" width="1" height="8" fill="#ff3232"/>
<rect x="612" y="166" width="1" height="21" fill="#54ffff"/>
<rect x="611" y="176" width="3" height="1" fill="#54ffff"/>
<rect x="617" y="176" width="1" height="16" fill="#54ffff"/>
<rect x="616" y="181" width="3" height="6" fill="#54ffff"/>
<rect x="623" y="144" width="1" height="28" fill="#ff3232"/>
<rect x="623" y="188" width="1" height="2" fill="#ff3232"/>
<rect x="622" y="172" width="3" height="1" fill="#ff3232"/>
<rect x="622" y="187" width="3" height="1" fill="#ff3232"/>
<rect x="622" y="172" width="1" height="16" fill="#ff3232"/>
<rect x="624" y="172" width="1" height="16" fill="#ff3232"/>
<rect x="628" y="161" width="1" height="2" fill="#ff3232"/>
<rect x="627" y="163" width="3" height="1" fill="#ff3232"/>
<rect x="627" y="177" width="3" height="1" fill="#ff3232"/>
<rect x="627" y="163" width="1" height="15" fill="#ff3232"/>
<rect x="629" y="163" width="1" height="15" fill="#ff3232"/>
<rect x="633" y="148" width="1" height="23" fill="#ffffff"/>
<rect x="632" y="160" width="2" height="1" fill="#ffffff"/>
<rect x="639" y="146" width="1" height="9" fill="#ff3232"/>
<rect x="639" y="157" width="1" height="4" fill="#ff3232"/>
<rect x="638" y="155" width="3" height="2" fill="#ff3232"/>
<rect x="644" y="139" width="1" height="7" fill="#ff3232"/>
<rect x="644" y="157" width="1" height="3" fill="#ff3232"/>
<rect x="643" y="146" width="3" height="1" fill="#ff3232"/>
<rect x="643" y="156" width="3" height="1" fill="#ff3232"/>
<rect x="643" y="146" width="1" height="11" fill="#ff3232"/>
<rect x="645" y="146" width="1" height="11" fill="#ff3232"/>
<rect x="649" y="148" width="1" height="17" fill="#54ffff"/>
<rect x="648" y="151" width="3" height="11" fill="#54ffff"/>
<rect x="654" y="145" width="3" height="1" fill="#ff3232"/>
<rect x="654" y="166" width="3" height="1" fill="#ff3232"/>
<rect x="654" y="145" width="1" height="22" fill="#ff3232"/>
<rect x="656" y="145" width="1" height="22" fill="#ff3232"/>
<rect x="660" y="140" width="1" height="4" fill="#ff3232"/>
<rect x="660" y="146" width="1" height="3" fill="#ff3232"/>
<rect x="659" y="144" width="3" height="2" fill="#ff3232"/>
<rect x="665" y="141" width="1" height="15" fill="#54ffff"/>
<rect x="664" y="144" width="3" height="8" fill="#54ffff"/>
<rect x="671" y="148" width="1" height="12" fill="#54ffff"/>
<rect x="670" y="148" width="3" height="8" fill="#54ffff"/>
<rect x="676" y="152" width="1" height="11" fill="#ff3232"/>
<rect x="675" y="129" width="3" height="1" fill="#ff3232"/>
<rect x="675" y="151" width="3" height="1" fill="#ff3232"/>
<rect x="675" y="129" width="1" height="23" fill="#ff3232"/>
<rect x="677" y="129" width="1" height="23" fill="#ff3232"/>
<rect x="681" y="126" width="1" height="43" fill="#54ffff"/>
<rect x="680" y="137" width="3" height="7" fill="#54ffff"/>
<rect x="687" y="142" width="1" height="29" fill="#54ffff"/>
<rect x="686" y="144" width="3" height="24" fill="#54ffff"/>
<rect x="692" y="149" width="1" height="8" fill="#ff3232"/>
<rect x="691" y="157" width="3" height="1" fill="#ff3232"/>
<rect x="691" y="168" width="3" height="1" fill="#ff3232"/>
<rect x="691" y="157" width="1" height="12" fill="#ff3232"/>
<rect x="693" y="157" width="1" height="12" fill="#ff3232"/>
<rect x="697" y="150" width="1" height="17" fill="#54ffff"/>
<rect x="696" y="157" width="3" height="4" fill="#54ffff"/>
<rect x="703" y="152" width="1" height="3" fill="#ff3232"/>
<rect x="703" y="160" width="1" height="4" fill="#ff3232"/>
<rect x="702" y="155" width="3" height="1" fill="#ff3232"/>
<rect x="702" y="159" width="3" height="1" fill="#ff3232"/>
<rect x="702" y="155" width="1" height="5" fill="#ff3232"/>
<rect x="704" y="155" width="1" height="5" fill="#ff3232"/>
<rect x="708" y="152" width="1" height="3" fill="#ff3232"/>
<rect x="707" y="104" width="3" height="1" fill="#ff3232"/>
<rect x="707" y="151" width="3" height="1" fill="#ff3232"/>
<rect x="707" y="104" width="1" height="48" fill="#ff3232"/>
<rect x="709" y="104" width="1" height="48" fill="#ff3232"/>
<rect x="713" y="60" width="1" height="68" fill="#54ffff"/>
<rect x="712" y="92" width="3" height="15" fill="#54ffff"/>
<rect x="719" y="95" width="1" height="34" fill="#54ffff"/>
<rect x="718" y="98" width="3" height="25" fill="#54ffff"/>
<rect x="724" y="111" width="1" height="7" fill="#ff3232"/>
<rect x="724" y="131" width="1" height="3" fill="#ff3232"/>
<rect x="723" y="118" width="3" height="1" fill="#ff3232"/>
<rect x="723" y="130" width="3" height="1" fill="#ff3232"/>
<rect x="723" y="118" width="1" height="13" fill="#ff3232"/>
<rect x="725" y="118" width="1" height="13" fill="#ff3232"/>
<rect x="730" y="79" width="1" height="34" fill="#ff3232"/>
<rect x="729" y="113" width="3" height="1" fill="#ff3232"/>
<rect x="729" y="121" width="3" height="1" fill="#ff3232"/>
<rect x="729" y="113" width="1" height="9" fill="#ff3232"/>
<rect x="731" y="113" width="1" height="9" fill="#ff3232"/>
<rect x="735" y="80" width="1" height="10" fill="#ff3232"/>
<rect x="734" y="90" width="3" height="1" fill="#ff3232"/>
<rect x="734" y="109" width="3" height="1" fill="#ff3232"/>
<rect x="734" y="90" width="1" height="20" fill="#ff3232"/>
<rect x="736" y="90" width="1" height="20" fill="#ff3232"/>
<rect x="740" y="90" width="1" height="37" fill="#54ffff"/>
<rect x="739" y="96" width="3" height="21" fill="#54ffff"/>
<rect x="746" y="89" width="1" height="16" fill="#ff3232"/>
<rect x="746" y="116" width="1" height="4" fill="#ff3232"/>
<rect x="745" y="105" width="3" height="1" fill="#ff3232"/>
<rect x="745" y="115" width="3" height="1" fill="#ff3232"/>
<rect x="745" y="105" width="1" height="11" fill="#ff3232"/>
<rect x="747" y="105" width="1" height="11" fill="#ff3232"/>
<rect x="751" y="105" width="1" height="29" fill="#54ffff"/>
<rect x="750" y="109" width="3" height="21" fill="#54ffff"/>
<rect x="756" y="121" width="1" height="5" fill="#ff3232"/>
<rect x="756" y="133" width="1" height="1" fill="#ff3232"/>
<rect x="755" y="126" width="3" height="1" fill="#ff3232"/>
<rect x="755" y="132" width="3" height="1" fill="#ff3232"/>
<rect x="755" y="126" width="1" height="7" fill="#ff3232"/>
<rect x="757" y="126" width="1" height="7" fill="#ff3232"/>
<rect x="762" y="125" width="1" height="11" fill="#ff3232"/>
<rect x="761" y="118" width="3" height="1" fill="#ff3232"/>
<rect x="761" y="124" width="3" height="1" fill="#ff3232"/>
<rect x="761" y="118" width="1" height="7" fill="#ff3232"/>
<rect x="763" y="118" width="1" height="7" fill="#ff3232"/>
<rect x="767" y="108" width="1" height="2" fill="#ff3232"/>
<rect x="766" y="110" width="3" height="1" fill="#ff3232"/>
<rect x="766" y="118" width="3" height="1" fill="#ff3232"/>
<rect x="766" y="110" width="1" height="9" fill="#ff3232"/>
<rect x="768" y="110" width="1" height="9" fill="#ff3232"/>
<rect x="772" y="106" width="1" height="16" fill="#54ffff"/>
<rect x="771" y="110" width="3" height="7" fill="#54ffff"/>
<rect x="778" y="107" width="1" height="12" fill="#54ffff"/>
<rect x="777" y="114" width="3" height="2" fill="#54ffff"/>
<rect x="783" y="102" width="1" height="2" fill="#ff3232"/>
<rect x="783" y="115" width="1" height="17" fill="#ff3232"/>
<rect x="782" y="104" width="3" height="1" fill="#ff3232"/>
<rect x="782" y="114" width="3" height="1" fill="#ff3232"/>
<rect x="782" y="104" width="1" height="11" fill="#ff3232"/>
<rect x="784" y="104" width="1" height="11" fill="#ff3232"/>
<rect x="788" y="98" width="1" height="2" fill="#ff3232"/>
<rect x="788" y="105" width="1" height="11" fill="#ff3232"/>
<rect x="787" y="100" width="3" height="1" fill="#ff3232"/>
<rect x="787" y="104" width="3" height="1" fill="#ff3232"/>
<rect x="787" y="100" width="1" height="5" fill="#ff3232"/>
<rect x="789" y="100" width="1" height="5" fill="#ff3232"/>
<rect x="794" y="93" width="1" height="20" fill="#54ffff"/>
<rect x="793" y="98" width="3" height="10" fill="#54ffff"/>
<rect x="799" y="102" width="1" height="24" fill="#54ffff"/>
<rect x="798" y="108" width="3" height="11" fill="#54ffff"/>
<rect x="804" y="116" width="1" height="27" fill="#54ffff"/>
<rect x="803" y="116" width="3" height="27" fill="#54ffff"/>
<rect x="810" y="128" width="1" height="15" fill="#ffffff"/>
<rect x="809" y="138" width="2" height="1" fill="#ffffff"/>
<rect x="815" y="127" width="1" height="11" fill="#54ffff"/>
<rect x="814" y="129" width="3" height="5" fill="#54ffff"/>
<rect x="820" y="106" width="1" height="9" fill="#ff3232"/>
<rect x="820" y="135" width="1" height="5" fill="#ff3232"/>
<rect x="819" y="115" width="3" height="1" fill="#ff3232"/>
<rect x="819" y="134" width="3" height="1" fill="#ff3232"/>
<rect x="819" y="115" width="1" height="20" fill="#ff3232"/>
<rect x="821" y="115" width="1" height="20" fill="#ff3232"/>
<rect x="826" y="118" width="1" height="6" fill="#ff3232"/>
<rect x="825" y="105" width="3" height="1" fill="#ff3232"/>
<rect x="825" y="117" width="3" height="1" fill="#ff3232"/>
<rect x="825" y="105" width="1" height="13" fill="#ff3232"/>
<rect x="827" y="105" width="1" height="13" fill="#ff3232"/>
<rect x="831" y="80" width="1" height="8" fill="#ff3232"/>
<rect x="831" y="107" width="1" height="1" fill="#ff3232"/>
<rect x="830" y="88" width="3" height="1" fill="#ff3232"/>
<rect x="830" y="106" width="3" height="1" fill="#ff3232"/>
<rect x="830" y="88" width="1" height="19" fill="#ff3232"/>
<rect x="832" y="88" width="1" height="19" fill="#ff3232"/>
<rect x="837" y="89" width="1" height="31" fill="#54ffff"/>
<rect x="836" y="89" width="3" height="21" fill="#54ffff"/>
<rect x="842" y="105" width="1" height="15" fill="#54ffff"/>
<rect x="841" y="109" width="3" height="2" fill="#54ffff"/>
<rect x="847" y="87" width="1" height="5" fill="#ff3232"/>
<rect x="847" y="115" width="1" height="3" fill="#ff3232"/>
<rect x="846" y="92" width="3" height="1" fill="#ff3232"/>
<rect x="846" y="114" width="3" height="1" fill="#ff3232"/>
<rect x="846" y="92" width="1" height="23" fill="#ff3232"/>
<rect x="848" y="92" width="1" height="23" fill="#ff3232"/>
<rect x="853" y="90" width="1" height="43" fill="#54ffff"/>
<rect x="852" y="92" width="3" height="37" fill="#54ffff"/>
<rect x="858" y="116" width="1" height="57" fill="#54ffff"/>
<rect x="857" y="130" width="3" height="7" fill="#54ffff"/>
<rect x="863" y="138" width="1" height="21" fill="#54ffff"/>
<rect x="862" y="144" width="3" height="14" fill="#54ffff"/>
<rect x="869" y="143" width="1" height="11" fill="#ff3232"/>
<rect x="869" y="163" width="1" height="4" fill="#ff3232"/>
<rect x="868" y="154" width="3" height="1" fill="#ff3232"/>
<rect x="868" y="162" width="3" height="1" fill="#ff3232"/>
<rect x="868" y="154" width="1" height="9" fill="#ff3232"/>
<rect x="870" y="154" width="1" height="9" fill="#ff3232"/>
<rect x="874" y="139" width="1" height="34" fill="#54ffff"/>
<rect x="873" y="156" width="3" height="5" fill="#54ffff"/>
<rect x="879" y="155" width="1" height="40" fill="#54ffff"/>
<rect x="878" y="161" width="3" height="30" fill="#54ffff"/>
<rect x="885" y="155" width="1" height="17" fill="#ff3232"/>
<rect x="885" y="188" width="1" height="12" fill="#ff3232"/>
<rect x="884" y="172" width="3" height="1" fill="#ff3232"/>
<rect x="884" y="187" width="3" height="1" fill="#ff3232"/>
<rect x="884" y="172" width="1" height="16" fill="#ff3232"/>
<rect x="886" y="172" width="1" height="16" fill="#ff3232"/>
<rect x="890" y="164" width="1" height="25" fill="#54ffff"/>
<rect x="889" y="167" width="3" height="2" fill="#54ffff"/>
<rect x="894" y="151" width="3" height="1" fill="#ff3232"/>
<rect x="894" y="169" width="3" height="1" fill="#ff3232"/>
<rect x="894" y="151" width="1" height="19" fill="#ff3232"/>
<rect x="896" y="151" width="1" height="19" fill="#ff3232"/>
<rect x="901" y="143" width="1" height="17" fill="#ffffff"/>
<rect x="900" y="153" width="2" height="1" fill="#ffffff"/>
<rect x="906" y="145" width="1" height="17" fill="#54ffff"/>
<rect x="905" y="151" width="3" height="1" fill="#54ffff"/>
<rect x="911" y="147" width="1" height="1" fill="#ff3232"/>
<rect x="911" y="153" width="1" height="13" fill="#ff3232"/>
<rect x="910" y="148" width="3" height="1" fill="#ff3232"/>
<rect x="910" y="152" width="3" height="1" fill="#ff3232"/>
<rect x="910" y="148" width="1" height="5" fill="#ff3232"/>
<rect x="912" y="148" width="1" height="5" fill="#ff3232"/>
<rect x="917" y="142" width="1" height="16" fill="#54ffff"/>
<rect x="916" y="142" width="3" height="15" fill="#54ffff"/>
<rect x="922" y="152" width="1" height="14" fill="#54ffff"/>
<rect x="921" y="159" width="3" height="5" fill="#54ffff"/>
<rect x="927" y="149" width="1" height="5" fill="#ff3232"/>
<rect x="926" y="154" width="3" height="1" fill="#ff3232"/>
<rect x="926" y="163" width="3" height="1" fill="#ff3232"/>
<rect x="926" y="154" width="1" height="10" fill="#ff3232"/>
<rect x="928" y="154" width="1" height="10" fill="#ff3232"/>
<rect x="933" y="153" width="1" height="15" fill="#54ffff"/>
<rect x="932" y="153" width="3" height="14" fill="#54ffff"/>
<rect x="938" y="162" width="1" height="36" fill="#54ffff"/>
<rect x="937" y="164" width="3" height="28" fill="#54ffff"/>
<rect x="943" y="185" width="1" height="19" fill="#54ffff"/>
<rect x="942" y="185" width="3" height="12" fill="#54ffff"/>
<rect x="949" y="194" width="1" height="18" fill="#54ffff"/>
<rect x="948" y="196" width="3" height="10" fill="#54ffff"/>
<rect x="954" y="205" width="1" height="36" fill="#54ffff"/>
<rect x="953" y="206" width="3" height="10" fill="#54ffff"/>
<rect x="960" y="222" width="1" height="3" fill="#ff3232"/>
<rect x="959" y="202" width="3" height="1" fill="#ff3232"/>
<rect x="959" y="221" width="3" height="1" fill="#ff3232"/>
<rect x="959" y="202" width="1" height="20" fill="#ff3232"/>
<rect x="961" y="202" width="1" height="20" fill="#ff3232"/>
<rect x="965" y="191" width="1" height="20" fill="#54ffff"/>
<rect x="964" y="197" width="3" height="11" fill="#54ffff"/>
<rect x="970" y="193" width="1" height="12" fill="#ff3232"/>
<rect x="970" y="213" width="1" height="3" fill="#ff3232"/>
<rect x="969" y="205" width="3" height="1" fill="#ff3232"/>
<rect x="969" y="212" width="3" height="1" fill="#ff3232"/>
<rect x="969" y="205" width="1" height="8" fill="#ff3232"/>
<rect x="971" y="205" width="1" height="8" fill="#ff3232"/>
<rect x="976" y="193" width="1" height="4" fill="#ff3232"/>
<rect x="976" y="201" width="1" height="23" fill="#ff3232"/>
<rect x="975" y="197" width="3" height="1" fill="#ff3232"/>
<rect x="975" y="200" width="3" height="1" fill="#ff3232"/>
<rect x="975" y="197" width="1" height="4" fill="#ff3232"/>
<rect x="977" y="197" width="1" height="4" fill="#ff3232"/>
<rect x="981" y="186" width="1" height="9" fill="#ff3232"/>
<rect x="980" y="195" width="3" height="1" fill="#ff3232"/>
<rect x="980" y="199" width="3" height="1" fill="#ff3232"/>
<rect x="980" y="195" width="1" height="5" fill="#ff3232"/>
<rect x="982" y="195" width="1" height="5" fill="#ff3232"/>
<rect x="986" y="192" width="1" height="16" fill="#54ffff"/>
<rect x="985" y="194" width="3" height="11" fill="#54ffff"/>
<rect x="992" y="192" width="1" height="1" fill="#ff3232"/>
<rect x="992" y="208" width="1" height="2" fill="#ff3232"/>
<rect x="991" y="193" width="3" height="1" fill="#ff3232"/>
<rect x="991" y="207" width="3" height="1" fill="#ff3232"/>
<rect x="991" y="193" width="1" height="15" fill="#ff3232"/>
<rect x="993" y="193" width="1" height="15" fill="#ff3232"/>
<rect x="997" y="208" width="1" height="21" fill="#ff3232"/>
<rect x="996" y="187" width="3" height="1" fill="#ff3232"/>
<rect x="996" y="207" width="3" height="1" fill="#ff3232"/>
<rect x="996" y="187" width="1" height="21" fill="#ff3232"/>
<rect x="998" y="187" width="1" height="21" fill="#ff3232"/>
<rect x="1002" y="156" width="1" height="3" fill="#ff3232"/>
<rect x="1002" y="181" width="1" height="11" fill="#ff3232"/>
<rect x="1001" y="159" width="3" height="1" fill="#ff3232"/>
<rect x="1001" y="180" width="3" height="1" fill="#ff3232"/>
<rect x="1001" y="159" width="1" height="22" fill="#ff3232"/>
<rect x="1003" y="159" width="1" height="22" fill="#ff3232"/>
<rect x="1008" y="154" width="1" height="3" fill="#ff3232"/>
<rect x="1008" y="163" width="1" height="10" fill="#ff3232"/>
<rect x="1007" y="157" width="3" height="1" fill="#ff3232"/>
<rect x="1007" y="162" width="3" height="1" fill="#ff3232"/>
<rect x="1007" y="157" width="1" height="6" fill="#ff3232"/>
<rect x="1009" y="157" width="1" height="6" fill="#ff3232"/>
<rect x="1013" y="149" width="1" height="24" fill="#54ffff"/>
<rect x="1012" y="157" width="3" height="14" fill="#54ffff"/>
<rect x="1018" y="80" width="1" height="107" fill="#54ffff"/>
<rect x="1017" y="171" width="3" height="8" fill="#54ffff"/>
<rect x="1024" y="173" width="1" height="3" fill="#ff3232"/>
<rect x="1024" y="181" width="1" height="14" fill="#ff3232"/>
<rect x="1023" y="176" width="3" height="1" fill="#ff3232"/>
<rect x="1023" y="180" width="3" height="1" fill="#ff3232"/>
<rect x="1023" y="176" width="1" height="5" fill="#ff3232"/>
<rect x="1025" y="176" width="1" height="5" fill="#ff3232"/>
<rect x="1029" y="171" width="1" height="14" fill="#ff3232"/>
<rect x="1028" y="163" width="3" height="1" fill="#ff3232"/>
<rect x="1028" y="170" width="3" height="1" fill="#ff3232"/>
<rect x="1028" y="163" width="1" height="8" fill="#ff3232"/>
<rect x="1030" y="163" width="1" height="8" fill="#ff3232"/>
<rect x="1034" y="151" width="1" height="10" fill="#ff3232"/>
<rect x="1034" y="168" width="1" height="2" fill="#ff3232"/>
<rect x="1033" y="161" width="3" height="1" fill="#ff3232"/>
<rect x="1033" y="167" width="3" height="1" fill="#ff3232"/>
<rect x="1033" y="161" width="1" height="7" fill="#ff3232"/>
<rect x="1035" y="161" width="1" height="7" fill="#ff3232"/>
<rect x="1040" y="117" width="1" height="14" fill="#ff3232"/>
<rect x="1040" y="167" width="1" height="1" fill="#ff3232"/>
<rect x="1039" y="131" width="3" height="1" fill="#ff3232"/>
<rect x="1039" y="166" width="3" height="1" fill="#ff3232"/>
<rect x="1039" y="131" width="1" height="36" fill="#ff3232"/>
<rect x="1041" y="131" width="1" height="36" fill="#ff3232"/>
<rect x="1045" y="138" width="1" height="6" fill="#ff3232"/>
<rect x="1044" y="116" width="3" height="1" fill="#ff3232"/>
<rect x="1044" y="137" width="3" height="1" fill="#ff3232"/>
<rect x="1044" y="116" width="1" height="22" fill="#ff3232"/>
<rect x="1046" y="116" width="1" height="22" fill="#ff3232"/>
<rect x="1050" y="112" width="1" height="19" fill="#54ffff"/>
<rect x="1049" y="114" width="3" height="7" fill="#54ffff"/>
<rect x="1056" y="113" width="1" height="6" fill="#ff3232"/>
<rect x="1056" y="126" width="1" height="14" fill="#ff3232"/>
<rect x="1055" y="119" width="3" height="1" fill="#ff3232"/>
<rect x="1055" y="125" width="3" height="1" fill="#ff3232"/>
<rect x="1055" y="119" width="1" height="7" fill="#ff3232"/>
<rect x="1057" y="119" width="1" height="7" fill="#ff3232"/>
<g>
<polyline points="1.7,525.4 10.2,527.1 18.6,529.1 27.1,530.1 35.5,529.6 42.3,531.3 49.1,535.5 55.8,538.6 62.6,540.3 71.1,542.3 79.5,543.7 88.0,546.5 96.4,549.4 104.9,551.6 113.4,552.5 121.8,552.1 130.3,550.8 138.7,548.2 147.2,545.3 155.7,542.0 164.1,538.1 172.6,533.8 179.4,531.3 180.0,530.6 196.9,530.9 208.8,531.5 220.6,534.8 230.8,536.5 256.1,536.5 268.0,539.1 281.5,542.5 298.4,546.7 312.0,550.9 325.5,556.0 330.0,559.3 346.9,561.5 363.8,563.1 380.8,565.7 397.7,564.3 414.6,562.6 431.5,559.3 448.4,555.2 465.4,550.5 480.0,547.8 496.9,542.2 513.8,534.6 530.8,525.3 547.7,516.0 564.6,510.1 581.5,505.8 598.4,504.1 615.4,503.3 630.0,501.8 646.9,498.4 663.8,496.7 680.8,497.5 697.7,500.1 706.1,501.4 723.1,500.1 740.0,497.5 756.9,494.1 773.8,489.9 780.0,489.9 796.9,486.5 813.8,484.8 830.8,482.3 847.7,480.6 864.6,480.6 881.5,483.1 898.4,486.5 915.4,489.1 932.3,491.6 940.0,493.5 956.9,497.7 973.8,502.8 990.8,507.8 1007.7,511.7 1024.6,512.9 1038.1,512.9 1048.3,510.4 1055.9,509.2" fill="none" stroke="#00e6ff" stroke-width="1" stroke-linejoin="round"/>
<polyline points="2,582.5 13.5,582.5 24.2,601.5 180.2,601.5 184.2,589.5 189.3,572.5 194.4,562.5 200,558.5 244.3,558.5 252.8,561.5 278.1,561.5 283.2,564.5 290.8,574.5 310.3,575.5 328.9,576.5 332.3,584.5 335.7,594.5 339.3,607.5 489.1,607.5 500.1,582.5 543,582.5 550.2,560.5 552.8,551.5 569.7,551.5 590,539.5 657.1,539.5 661.3,536.5 671.5,525.5 756.9,525.5 768.7,517.5 778.9,517.5 789.1,507.5 847.7,507.5 856.1,504.5 868,501.5 878.1,503.5 884.9,511.5 890,519.5 940.7,519.5 948.5,521.5 956.9,527.5 964.5,532.5 1055.9,532.5" fill="none" stroke="#40ffa0" stroke-width="1" stroke-linejoin="round"/>
<polyline points="2,416.5 50.4,416.5 53.3,426.5 56.7,443.5 60.1,464.5 61.8,473.5 66,481.5 72.8,482.5 76.1,484.5 104.1,484.5 106.6,487.5 114.7,510.5 164.1,510.5 173.4,503.5 323.8,503.5 334,512.5 336.5,520.5 339.9,532.5 343.8,543.5 349.2,545.5 357.7,548.5 372.3,549.5 388.4,550.5 397.7,536.5 428.1,536.5 438.3,526.5 443.5,516.5 505.4,516.5 511.3,500.5 516.4,475.5 521.5,461.5 671.5,461.5 681.6,470.5 704.5,470.5 712.9,474.5 736.6,473.5 745.9,466.5 834.1,466.5 834.1,465.5 994.1,465.5 999.2,466.5 1008.5,467.5 1012.8,476.5 1018.7,490.5 1024.6,495.5 1029.7,497.5 1040.7,497.5 1045.8,492.5 1050.8,484.5 1055.9,480.5" fill="none" stroke="#ffff80" stroke-width="1" stroke-linejoin="round"/>
<polyline points="1.7,572.4 6.8,571.1 12.7,577.0 18.6,584.6 25.4,587.6 30.5,585.4 35.5,574.5 42.3,559.2 49.1,542.3 55.8,532.1 62.6,528.8 69.4,526.6 73.6,527.1 77.8,535.5 84.6,543.1 91.4,549.9 94.8,549.1 101.5,545.7 108.3,541.5 115.1,535.5 121.8,528.8 128.6,523.7 135.4,522.0 143.8,522.0 152.3,521.2 159.1,517.8 167.5,511.8 172.6,512.2 179.4,516.9 180.0,517.9 185.1,525.5 191.8,535.7 196.9,544.1 202.0,548.9 210.5,551.3 222.3,552.9 234.1,554.3 247.7,555.1 261.2,556.3 274.8,558.5 283.2,562.8 290.0,565.3 296.8,564.5 305.2,566.1 315.4,565.8 323.8,567.8 330.0,573.8 338.5,575.0 346.9,571.6 352.0,567.4 354.5,560.6 360.5,558.1 365.5,559.8 372.3,565.7 380.8,572.5 383.3,573.8 389.2,567.4 397.7,555.5 404.5,547.1 409.5,542.8 426.4,542.8 433.2,536.1 438.3,531.0 445.1,527.6 451.8,525.9 458.6,528.5 465.4,528.1 473.8,525.1 480.0,522.8 485.1,520.2 491.8,523.6 500.3,528.2 505.4,522.8 510.5,514.3 515.5,504.1 520.6,492.3 525.7,483.0 531.6,480.5 535.8,484.7 540.1,480.5 547.7,478.4 553.6,477.9 557.8,481.8 562.9,481.3 568.0,486.4 574.8,492.3 581.5,493.7 588.3,499.1 596.8,505.8 605.2,513.5 612.0,516.8 618.7,517.3 625.5,512.6 630.0,510.2 638.5,506.8 646.9,502.6 655.4,499.2 663.8,498.4 672.3,495.8 680.8,495.8 689.2,498.4 697.7,500.1 702.8,500.9 707.8,497.5 714.6,490.8 723.1,484.0 731.5,478.1 740.0,477.2 746.8,476.4 755.2,479.8 763.7,481.5 773.8,481.5 780.0,479.8 788.5,476.4 798.6,476.4 805.4,480.6 813.8,485.7 820.6,487.0 827.4,484.0 834.1,479.8 840.9,474.7 847.7,472.1 852.8,473.5 859.5,481.5 868.0,489.1 876.4,499.2 883.2,506.0 890.0,508.0 898.4,507.7 905.2,505.1 912.0,500.6 918.7,499.6 927.2,500.6 934.0,503.5 940.0,508.7 946.8,514.6 953.5,522.2 962.0,526.8 970.5,528.1 978.9,526.8 987.4,525.6 995.8,522.7 1002.6,518.0 1007.7,514.6 1012.8,510.4 1021.2,509.2 1029.7,508.2 1036.4,506.1 1043.2,501.1 1050.0,493.5 1055.9,487.2" fill="none" stroke="#ffc000" stroke-width="3" stroke-linejoin="round"/>
<polyline points="1.7,572.4 3.4,572.0" fill="none" stroke="#00ff00" stroke-width="3" stroke-linejoin="round"/>
<polyline points="12.7,577.0 12.7,577.0 18.6,584.6 25.4,587.6 25.4,587.6" fill="none" stroke="#00ff00" stroke-width="3" stroke-linejoin="round"/>
<polyline points="33.8,578.2 35.5,574.5 42.3,559.2 49.1,542.3 55.8,532.1 55.8,532.1" fill="none" stroke="#ff0000" stroke-width="3" stroke-linejoin="round"/>
<polyline points="67.7,527.1 69.4,526.6 73.6,527.1 73.6,527.1" fill="none" stroke="#ff0000" stroke-width="3" stroke-linejoin="round"/>
<polyline points="77,533.9 77.8,535.5 84.6,543.1 91.4,549.9 94.8,549.1 94.8,549.1" fill="none" stroke="#00ff00" stroke-width="3" stroke-linejoin="round"/>
<polyline points="94.8,549.1 94.8,549.1 99.8,546.6" fill="none" stroke="#ff0000" stroke-width="3" stroke-linejoin="round"/>
<polyline points="108.3,541.5 108.3,541.5 115,535.6" fill="none" stroke="#ff0000" stroke-width="3" stroke-linejoin="round"/>
<polyline points="121.8,528.8 121.8,528.8 126,525.6" fill="none" stroke="#00ff00" stroke-width="3" stroke-linejoin="round"/>
<polyline points="127,524.9 128.6,523.7 132,522.9" fill="none" stroke="#ff0000" stroke-width="3" stroke-linejoin="round"/>
<polyline points="138,522.0 140.4,522.0" fill="none" stroke="#00ff00" stroke-width="3" stroke-linejoin="round"/>
<polyline points="162.4,515.4 167.5,511.8 169.2,511.9" fill="none" stroke="#ff0000" stroke-width="3" stroke-linejoin="round"/>
<polyline points="172.6,512.2 172.6,512.2 179.4,516.9 180.0,517.9 185.1,525.5 191.8,535.7 196.9,544.1 202.0,548.9 210.5,551.3 217.2,552.2" fill="none" stroke="#00ff00" stroke-width="3" stroke-linejoin="round"/>
<polyline points="225.7,553.3 232.5,554.1" fill="none" stroke="#00ff00" stroke-width="3" stroke-linejoin="round"/>
<polyline points="239.2,554.6 246,555.0" fill="none" stroke="#00ff00" stroke-width="3" stroke-linejoin="round"/>
<polyline points="259.5,556.1 261.2,556.3 264.6,556.9" fill="none" stroke="#00ff00" stroke-width="3" stroke-linejoin="round"/>
<polyline points="274.8,558.5 274.8,558.5 283.2,562.8 290.0,565.3 291.7,565.1" fill="none" stroke="#00ff00" stroke-width="3" stroke-linejoin="round"/>
<polyline points="298.4,564.8 303.5,565.8" fill="none" stroke="#00ff00" stroke-width="3" stroke-linejoin="round"/>
<polyline points="317.1,566.2 323.8,567.8 328.9,572.7" fill="none" stroke="#00ff00" stroke-width="3" stroke-linejoin="round"/>
<polyline points="335.4,574.6 338.5,575.0 340,574.4" fill="none" stroke="#00ff00" stroke-width="3" stroke-linejoin="round"/>
<polyline points="340,574.4 344.7,572.5" fill="none" stroke="#ff0000" stroke-width="3" stroke-linejoin="round"/>
<polyline points="364.9,559.6 365.5,559.8 372.3,565.7 380.8,572.5 383.3,573.8 383.3,573.8" fill="none" stroke="#00ff00" stroke-width="3" stroke-linejoin="round"/>
<polyline points="386.8,570.0 389.2,567.4 397.7,555.5 404.5,547.1 409.5,542.8 409.5,542.8" fill="none" stroke="#ff0000" stroke-width="3" stroke-linejoin="round"/>
<polyline points="413.8,542.8 418.8,542.8" fill="none" stroke="#00ff00" stroke-width="3" stroke-linejoin="round"/>
<polyline points="428.1,541.1 433.2,536.1 435.8,533.5" fill="none" stroke="#ff0000" stroke-width="3" stroke-linejoin="round"/>
<polyline points="443.4,528.5 445.1,527.6 446.8,527.2" fill="none" stroke="#ff0000" stroke-width="3" stroke-linejoin="round"/>
<polyline points="456.9,527.9 458.6,528.5 463.7,528.2" fill="none" stroke="#00ff00" stroke-width="3" stroke-linejoin="round"/>
<polyline points="477.2,523.8 480.0,522.8 485.1,520.2 485.4,520.4" fill="none" stroke="#ff0000" stroke-width="3" stroke-linejoin="round"/>
<polyline points="490.4,522.9 491.8,523.6 500.3,528.2 501,527.5" fill="none" stroke="#00ff00" stroke-width="3" stroke-linejoin="round"/>
<polyline points="507.1,520.0 510.5,514.3 515.5,504.1 520.6,492.3 525.7,483.0 527.4,482.3" fill="none" stroke="#ff0000" stroke-width="3" stroke-linejoin="round"/>
<polyline points="534.1,483.0 535.8,484.7 538.4,482.2" fill="none" stroke="#00ff00" stroke-width="3" stroke-linejoin="round"/>
<polyline points="538.4,482.2 540.1,480.5 543.5,479.6" fill="none" stroke="#ff0000" stroke-width="3" stroke-linejoin="round"/>
<polyline points="554.5,478.7 557.8,481.8 560.4,481.5" fill="none" stroke="#00ff00" stroke-width="3" stroke-linejoin="round"/>
<polyline points="568,486.4 568.0,486.4 574.8,492.3 581.5,493.7 588.3,499.1 596.8,505.8 605.2,513.5 612.0,516.8 613.7,516.9" fill="none" stroke="#00ff00" stroke-width="3" stroke-linejoin="round"/>
<polyline points="619.6,516.7 623.8,513.8" fill="none" stroke="#ff0000" stroke-width="3" stroke-linejoin="round"/>
<polyline points="639.1,506.5 645,503.6" fill="none" stroke="#ff0000" stroke-width="3" stroke-linejoin="round"/>
<polyline points="672.3,495.8 672.3,495.8 678.2,495.8" fill="none" stroke="#ff0000" stroke-width="3" stroke-linejoin="round"/>
<polyline points="687.5,497.9 689.2,498.4 697.7,500.1 702.8,500.9 704.5,499.7" fill="none" stroke="#00ff00" stroke-width="3" stroke-linejoin="round"/>
<polyline points="707.8,497.5 707.8,497.5 714.6,490.8 723.1,484.0 731.5,478.1 731.5,478.1" fill="none" stroke="#ff0000" stroke-width="3" stroke-linejoin="round"/>
<polyline points="738.3,477.4 740.0,477.2 741.7,477.0" fill="none" stroke="#00ff00" stroke-width="3" stroke-linejoin="round"/>
<polyline points="751.8,478.4 755.2,479.8 763.7,481.5 763.7,481.5" fill="none" stroke="#00ff00" stroke-width="3" stroke-linejoin="round"/>
<polyline points="770.4,481.5 773.8,481.5 773.8,481.5" fill="none" stroke="#00ff00" stroke-width="3" stroke-linejoin="round"/>
<polyline points="799.3,476.8 805.4,480.6 813.8,485.7 818.9,486.7" fill="none" stroke="#00ff00" stroke-width="3" stroke-linejoin="round"/>
<polyline points="829.1,482.9 834.1,479.8 835.8,478.5" fill="none" stroke="#ff0000" stroke-width="3" stroke-linejoin="round"/>
<polyline points="851.1,473.0 852.8,473.5 859.5,481.5 868.0,489.1 876.4,499.2 883.2,506.0 890.0,508.0 891.7,507.9" fill="none" stroke="#00ff00" stroke-width="3" stroke-linejoin="round"/>
<polyline points="902.7,506.1 905.2,505.1 906.9,504.0" fill="none" stroke="#ff0000" stroke-width="3" stroke-linejoin="round"/>
<polyline points="922.1,500.0 927.2,500.6 934.0,503.5 940.0,508.7 946.8,514.6 953.5,522.2 962.0,526.8 970.5,528.1 972.1,527.9" fill="none" stroke="#00ff00" stroke-width="3" stroke-linejoin="round"/>
<polyline points="982.3,526.3 986.5,525.7" fill="none" stroke="#00ff00" stroke-width="3" stroke-linejoin="round"/>
<polyline points="1002.6,518.0 1002.6,518.0 1007.7,514.6 1007.7,514.6" fill="none" stroke="#ff0000" stroke-width="3" stroke-linejoin="round"/>
<polyline points="1011.9,511.1 1012.8,510.4 1014.5,510.2" fill="none" stroke="#ff0000" stroke-width="3" stroke-linejoin="round"/>
<polyline points="1028,508.4 1029.7,508.2 1033.1,507.1" fill="none" stroke="#00ff00" stroke-width="3" stroke-linejoin="round"/>
<polyline points="1038.1,504.9 1043.2,501.1 1050.0,493.5 1055.9,487.2" fill="none" stroke="#ff0000" stroke-width="3" stroke-linejoin="round"/>
<polyline points="351.2,559.8 356.3,559.8" fill="none" stroke="#ff0000" stroke-width="3" stroke-linejoin="round"/>
<polyline points="1.7,557.2 6.8,563.5 12.7,572.8 18.6,578.2 25.4,579.5 30.5,578.7 35.5,572.8 42.3,567.7 49.1,563.5 55.8,558.4 62.6,550.8 69.4,543.1 76.1,538.1 82.9,535.5 88.0,538.1 93.1,540.6 98.1,536.4 103.2,538.9 108.3,540.6 115.1,539.8 121.8,538.1 128.6,534.7 135.4,530.5 143.8,525.4 152.3,523.7 159.1,519.5 167.5,516.9 176.0,517.8 180.0,519.6 190.2,523.8 200.3,530.6 213.8,540.8 225.7,550.1 239.2,553.5 256.1,555.1 274.8,557.7 288.3,560.7 296.8,559.7 305.2,563.6 315.4,564.5 323.8,566.1 330.0,569.9 340.2,570.4 352.0,568.2 363.8,566.5 374.0,568.2 382.5,569.9 392.6,563.1 401.1,558.9 411.2,558.1 421.4,553.0 428.1,547.1 433.2,540.3 440.0,536.9 451.8,535.2 462.0,531.8 473.8,527.6 480.0,524.5 491.8,525.3 502.0,527.0 508.8,519.4 517.2,512.6 527.4,507.5 537.5,497.4 547.7,486.4 553.6,480.5 561.2,482.1 571.4,484.7 581.5,485.5 590.0,491.5 598.4,498.2 608.6,504.1 618.7,509.2 628.9,512.6 630.0,512.8 640.2,512.8 652.0,507.7 663.8,502.6 675.7,499.2 689.2,498.4 702.8,498.9 714.6,495.8 724.8,491.6 733.2,488.2 741.7,482.3 748.4,480.3 758.6,480.6 773.8,480.9 780.0,480.6 796.9,478.1 810.5,480.6 824.0,481.5 835.8,480.6 847.7,478.9 859.5,479.8 869.7,482.3 878.1,489.1 886.6,495.0 895.1,499.2 903.5,502.9 915.4,504.0 927.2,504.3 935.7,503.5 940.0,504.5 950.2,508.7 960.3,514.6 970.5,520.5 978.9,522.7 984.0,525.1 995.8,524.8 1007.7,519.3 1017.8,516.0 1028.0,514.3 1036.4,510.9 1044.9,503.6 1055.9,498.0" fill="none" stroke="#ffff00" stroke-width="1" stroke-linejoin="round"/>
<polyline points="1.7,573.1 6.8,572.8 12.7,577.0 18.6,580.4 25.4,581.6 30.5,581.2 35.5,575.3 42.3,570.2 49.1,558.4 55.8,540.6 62.6,533.0 69.4,531.3 77.8,533.0 82.9,533.8 88.0,540.6 93.1,545.3 99.8,546.0 108.3,544.3 115.1,539.8 121.8,533.0 128.6,527.1 135.4,524.5 143.8,522.8 152.3,521.2 159.1,518.6 167.5,515.6 176.0,515.6 180.0,517.1 196.9,534.8 211.3,549.2 222.3,552.6 239.2,554.3 264.6,556.8 281.5,561.1 288.3,563.1 298.4,563.6 315.4,564.5 323.8,565.3 328.9,572.9 330.0,570.8 346.9,569.9 355.4,568.2 363.8,565.7 366.4,560.6 374.0,564.0 382.5,568.2 389.2,564.8 397.7,560.6 404.5,555.5 409.5,553.0 414.6,547.1 419.7,542.8 428.1,540.3 434.9,536.1 448.4,531.0 458.6,528.5 473.8,525.9 480.0,522.8 490.2,523.6 500.3,526.1 507.1,521.1 513.8,512.6 522.3,504.1 530.8,490.6 537.5,483.0 547.7,481.3 554.5,479.6 561.2,483.0 569.7,486.4 581.5,490.6 591.7,499.1 601.8,506.7 612.0,510.9 618.7,515.1 625.5,516.0 630.0,512.8 646.9,506.0 663.8,500.1 680.8,497.5 697.7,499.2 706.1,499.2 714.6,494.1 726.4,487.4 734.9,480.6 745.1,478.1 755.2,479.8 773.8,480.6 780.0,479.8 796.9,477.6 805.4,480.6 818.9,483.7 830.8,480.6 840.9,478.9 847.7,475.5 854.5,476.4 864.6,483.1 874.8,492.5 881.5,499.2 888.3,505.1 898.4,506.0 912.0,504.0 923.8,500.9 932.3,501.8 940.0,506.1 948.5,512.9 956.9,518.0 965.4,523.9 973.8,526.8 984.0,527.3 994.1,525.6 1002.6,521.4 1011.1,515.4 1021.2,512.9 1031.4,510.9 1039.8,505.3 1048.3,498.5 1055.9,494.3" fill="none" stroke="#ffffff" stroke-width="1" stroke-linejoin="round"/>
</g>
<g shape-rendering="geometricPrecision">
<rect x="5.5" y="4.5" width="11" height="9" rx="2" fill="none" stroke="#909090"/><rect x="12" y="6" width="3" height="6" fill="#909090"/>
<rect x="1061.5" y="24.5" width="11" height="9" rx="2" fill="none" stroke="#808080"/><rect x="1068" y="26" width="3" height="6" fill="#909090"/>
<path d="M1047.5 24.5l5 5-5 5-5-5z" fill="none" stroke="#808080"/>
<circle cx="134" cy="28.500" r="6" fill="#707070"/><path d="M131 27.500l3 3 3-3" fill="none" stroke="#e0e0e0" stroke-width="1.200"/>
<circle cx="8.500" cy="405.500" r="6" fill="#707070"/><path d="M5.500 404.500l3 3 3-3" fill="none" stroke="#e0e0e0" stroke-width="1.200"/>
</g>
</svg>
<div id="txt">
<div class="t " style="left:28px;top:3px;color:#c8c8c8;font-size:12px;">分时</div>
<div class="t " style="left:62px;top:3px;color:#c8c8c8;font-size:12px;">1分钟</div>
<div class="t " style="left:101px;top:3px;color:#c8c8c8;font-size:12px;">5分钟</div>
<div class="t " style="left:140px;top:3px;color:#c8c8c8;font-size:12px;">15分钟</div>
<div class="t " style="left:186px;top:3px;color:#c8c8c8;font-size:12px;">30分钟</div>
<div class="t " style="left:232px;top:3px;color:#c8c8c8;font-size:12px;">60分钟</div>
<div class="t " style="left:279px;top:3px;color:#00ffff;font-size:12px;">日线</div>
<div class="t " style="left:312px;top:3px;color:#c8c8c8;font-size:12px;">周线</div>
<div class="t " style="left:345px;top:3px;color:#c8c8c8;font-size:12px;">月线</div>
<div class="t " style="left:379px;top:3px;color:#c8c8c8;font-size:12px;">多周期</div>
<div class="t " style="left:423px;top:3px;color:#c8c8c8;font-size:12px;">更多<span style="margin-left:2px">&gt;</span></div>
<div class="t c" style="left:811px;top:3px;width:33px;color:#c8c8c8">复权</div>
<div class="t c" style="left:845px;top:3px;width:34px;color:#c8c8c8">叠加</div>
<div class="t c" style="left:880px;top:3px;width:34px;color:#c8c8c8">多股</div>
<div class="t c" style="left:915px;top:3px;width:34px;color:#c8c8c8">统计</div>
<div class="t c" style="left:950px;top:3px;width:34px;color:#c8c8c8">画线</div>
<div class="t c" style="left:985px;top:3px;width:34px;color:#c8c8c8">F10</div>
<div class="t c" style="left:1020px;top:3px;width:34px;color:#c8c8c8">标记</div>
<div class="t c" style="left:1055px;top:3px;width:34px;color:#c8c8c8">+自选</div>
<div class="t c" style="left:1090px;top:3px;width:36px;color:#c8c8c8">返回</div>
<div class="t " style="left:3px;top:23px;color:#c8c8c8;font-size:12px;">中农联合(日线.前复权)</div>
<div class="t a" style="left:19px;top:371px;color:#c8c8c8;font-size:12px;"><span class="ar">←</span>12.78</div>
<div class="t a" style="left:512px;top:38px;color:#c8c8c8;font-size:12px;"><span class="ar">←</span>18.96</div>
<div class="t a ax" style="left:1090px;top:32px;color:#ff3232;font-size:12px;">19.00</div>
<div class="t a ax" style="left:1090px;top:59px;color:#ff3232;font-size:12px;">18.50</div>
<div class="t a ax" style="left:1090px;top:86px;color:#ff3232;font-size:12px;">18.00</div>
<div class="t a ax" style="left:1090px;top:114px;color:#ff3232;font-size:12px;">17.50</div>
<div class="t a ax" style="left:1090px;top:141px;color:#ff3232;font-size:12px;">17.00</div>
<div class="t a ax" style="left:1090px;top:169px;color:#ff3232;font-size:12px;">16.50</div>
<div class="t a ax" style="left:1090px;top:196px;color:#ff3232;font-size:12px;">16.00</div>
<div class="t a ax" style="left:1090px;top:223px;color:#ff3232;font-size:12px;">15.50</div>
<div class="t a ax" style="left:1090px;top:250px;color:#ff3232;font-size:12px;">15.00</div>
<div class="t a ax" style="left:1090px;top:278px;color:#ff3232;font-size:12px;">14.50</div>
<div class="t a ax" style="left:1090px;top:305px;color:#ff3232;font-size:12px;">14.00</div>
<div class="t a ax" style="left:1090px;top:332px;color:#ff3232;font-size:12px;">13.50</div>
<div class="t a ax" style="left:1090px;top:359px;color:#ff3232;font-size:12px;">13.00</div>
<div class="t a ax" style="left:1090px;top:432px;color:#ff3232;font-size:12px;">19.00</div>
<div class="t a ax" style="left:1090px;top:461px;color:#ff3232;font-size:12px;">18.00</div>
<div class="t a ax" style="left:1090px;top:490px;color:#ff3232;font-size:12px;">17.00</div>
<div class="t a ax" style="left:1090px;top:519px;color:#ff3232;font-size:12px;">16.00</div>
<div class="t a ax" style="left:1090px;top:548px;color:#ff3232;font-size:12px;">15.00</div>
<div class="t a ax" style="left:1090px;top:577px;color:#ff3232;font-size:12px;">14.00</div>
<div class="t a" style="left:1076px;top:277px;width:50px;height:15px;line-height:15px;background:#000080;color:#e8e8d8;font-size:12px;border-top:1px solid #b00000;border-bottom:1px solid #b00000">14.32</div>
<div class="t c" style="left:321px;top:382px;width:13px;height:13px;line-height:13px;background:#008000;color:#fff">跌</div>
<div class="t c" style="left:498px;top:382px;width:13px;height:13px;line-height:13px;background:#800000;color:#fff">涨</div>
<div class="t c" style="left:856px;top:382px;width:13px;height:13px;line-height:13px;background:#000080;color:#fff">财</div>
<div class="t " style="left:17px;top:399px;color:#e0e0e0;font-size:12px;">股朋指标网</div>
<div class="t a" style="left:83px;top:399px;color:#ffc800;font-size:12px;">MA05: 17.32</div>
<div class="t a" style="left:155px;top:399px;color:#ff0000;font-size:12px;">: 17.32</div>
<div class="t a" style="left:197px;top:399px;color:#ffffff;font-size:12px;">压力: 17.55</div>
<div class="t a" style="left:263px;top:399px;color:#40ff80;font-size:12px;">支撑: 15.73</div>
<div class="t a" style="left:330px;top:399px;color:#ffffff;font-size:12px;">: 17.11</div>
<div class="t a" style="left:372px;top:399px;color:#ffff00;font-size:12px;">: 16.95</div>
<div class="t a" style="left:413px;top:399px;color:#00e0ff;font-size:12px;">: 16.55</div>
<div class="t " style="left:67px;top:506px;color:#00ffff;font-size:12px;"><span class="ar">←</span>风险</div>
<div class="t " style="left:137px;top:491px;color:#00ffff;font-size:12px;"><span class="ar">←</span>风险</div>
<div class="t " style="left:362px;top:531px;color:#00ffff;font-size:12px;"><span class="ar">←</span>风险</div>
<div class="t " style="left:420px;top:516px;color:#00ffff;font-size:12px;"><span class="ar">←</span>风险</div>
<div class="t " style="left:526px;top:460px;color:#00ffff;font-size:12px;"><span class="ar">←</span>风险</div>
<div class="t " style="left:650px;top:481px;color:#00ffff;font-size:12px;"><span class="ar">←</span>风险</div>
<div class="t " style="left:741px;top:449px;color:#00ffff;font-size:12px;"><span class="ar">←</span>风险</div>
<div class="t " style="left:918px;top:478px;color:#00ffff;font-size:12px;"><span class="ar">←</span>风险</div>
<div class="t " style="left:1019px;top:444px;color:#00ffff;font-size:12px;"><span class="ar">←</span>风险</div>
<div class="t " style="left:88px;top:523px;color:#00ff00;font-size:12px;"><span class="ar">←</span>清仓</div>
<div class="t " style="left:178px;top:510px;color:#00ff00;font-size:12px;"><span class="ar">←</span>清仓</div>
<div class="t " style="left:490px;top:499px;color:#00ff00;font-size:12px;"><span class="ar">←</span>清仓</div>
<div class="t " style="left:559px;top:465px;color:#00ff00;font-size:12px;"><span class="ar">←</span>清仓</div>
<div class="t " style="left:688px;top:478px;color:#00ff00;font-size:12px;"><span class="ar">←</span>清仓</div>
<div class="t " style="left:854px;top:450px;color:#00ff00;font-size:12px;"><span class="ar">←</span>清仓</div>
<div class="t " style="left:164px;top:525px;color:#ff0000;font-size:12px;"><span class="ar">←</span>加仓</div>
<div class="t " style="left:345px;top:584px;color:#ff0000;font-size:12px;"><span class="ar">←</span>加仓</div>
<div class="t " style="left:431px;top:538px;color:#ff0000;font-size:12px;"><span class="ar">←</span>加仓</div>
<div class="t " style="left:506px;top:542px;color:#ff0000;font-size:12px;"><span class="ar">←</span>加仓</div>
<div class="t " style="left:645px;top:507px;color:#ff0000;font-size:12px;"><span class="ar">←</span>加仓</div>
<div class="t " style="left:709px;top:503px;color:#ff0000;font-size:12px;"><span class="ar">←</span>加仓</div>
<div class="t " style="left:832px;top:481px;color:#ff0000;font-size:12px;"><span class="ar">←</span>加仓</div>
<div class="t " style="left:1003px;top:522px;color:#ff0000;font-size:12px;"><span class="ar">←</span>加仓</div>
<div class="t " style="left:334px;top:604px;color:#ffff00;font-size:12px;"><span class="ar">←</span>买入</div>
<div class="t " style="left:521px;top:493px;color:#ffff00;font-size:12px;">强势狙击</div>
<div class="t " style="left:35px;top:557px;color:#ff0000;font-size:12px;"><span class="ar">←</span>加仓</div>
<div class="t " style="left:35px;top:557px;color:#ffff00;font-size:12px;"><span class="ar">←</span>买入</div>
<div class="t " style="left:99px;top:552px;color:#ff0000;font-size:12px;"><span class="ar">←</span>加仓</div>
<div class="t " style="left:99px;top:552px;color:#ffff00;font-size:12px;"><span class="ar">←</span>买入</div>
<div class="t a" style="left:3px;top:632px;color:#ff3232;font-size:12px;">2024年</div>
<div class="t a" style="left:105px;top:632px;color:#ff3232;font-size:12px;">2</div>
<div class="t a" style="left:202px;top:632px;color:#ff3232;font-size:12px;">3</div>
<div class="t a" style="left:314px;top:632px;color:#ff3232;font-size:12px;">4</div>
<div class="t a" style="left:427px;top:632px;color:#ff3232;font-size:12px;">5</div>
<div class="t a" style="left:528px;top:632px;color:#ff3232;font-size:12px;">6</div>
<div class="t a" style="left:635px;top:632px;color:#ff3232;font-size:12px;">7</div>
<div class="t a" style="left:758px;top:632px;color:#ff3232;font-size:12px;">8</div>
<div class="t a" style="left:871px;top:632px;color:#ff3232;font-size:12px;">9</div>
<div class="t a" style="left:774px;top:631px;width:78px;height:15px;line-height:15px;background:#000080;color:#fff;font-size:12px;text-align:center">2025/08/06/三</div>
<div style="position:absolute;left:978px;top:599px;width:152px;height:51px;background:#000"></div>
<div class="t w" style="left:999px;top:608px;font-size:21px;color:#fff;font-weight:700;letter-spacing:-0.3px">乐淘公式网</div>
<div class="t w" style="left:1001px;top:631px;font-size:15px;color:#fff;font-weight:bold">www.60lt.com</div>
</div>
</body></html>
